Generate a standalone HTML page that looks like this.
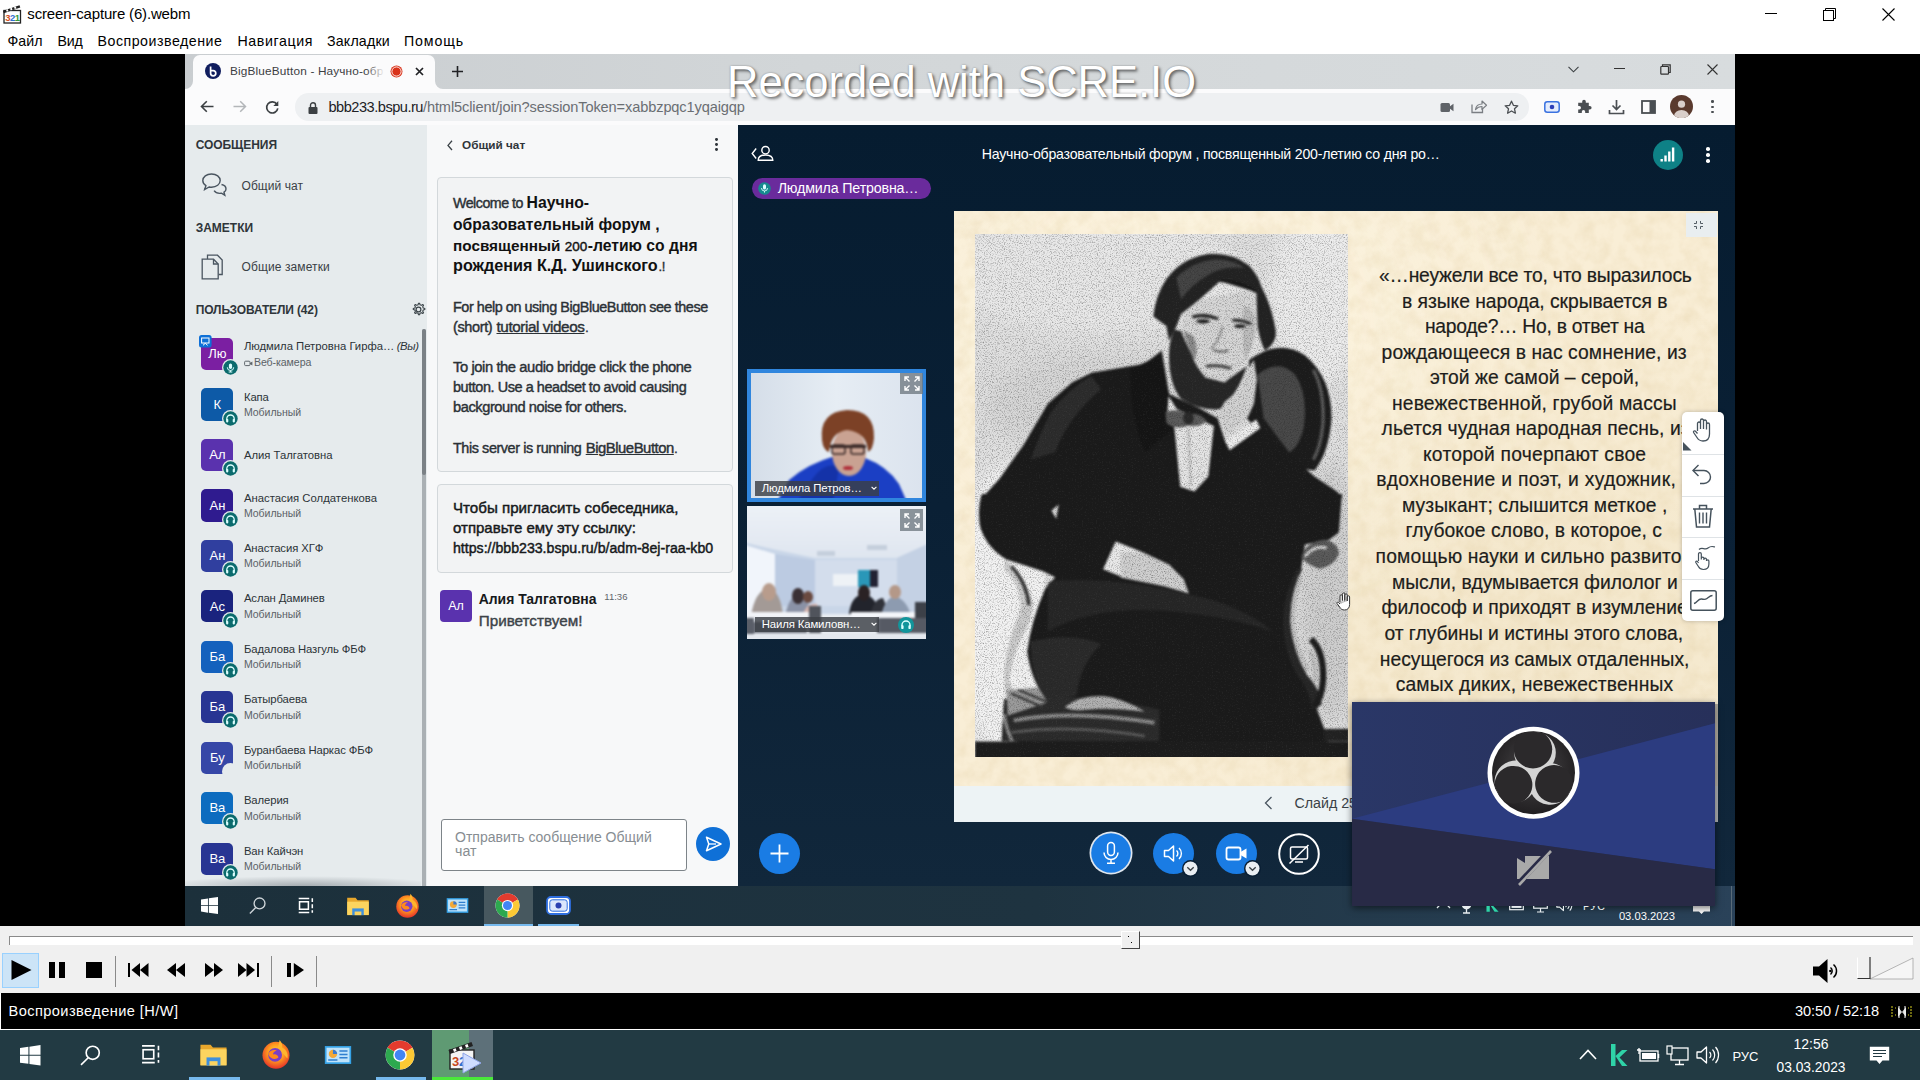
<!DOCTYPE html>
<html><head><meta charset="utf-8"><title>screen</title>
<style>
html,body{margin:0;padding:0;background:#000;}
body{width:1920px;height:1080px;position:relative;overflow:hidden;font-family:"Liberation Sans",sans-serif;}
body div, body svg{position:absolute;}
svg{overflow:visible;}
</style></head><body>
<div style="left:0px;top:0px;width:1920px;height:54px;background:#fff;"></div>
<svg style="left:2px;top:4px;" width="20" height="20" viewBox="0 0 20 20"><rect x="2" y="6.5" width="16.5" height="12.5" fill="#fff" stroke="#222" stroke-width="1.3"/>
<path d="M1 6.8 L17.5 1.2 L18.3 3.6 L1.8 9.2Z" fill="#222"/>
<path d="M4 5.8l1.8-.6.7 2-1.8.6zM8 4.4l1.8-.6.7 2-1.8.6zM12 3.1l1.8-.6.7 2-1.8.6z" fill="#fff"/>
<text x="3.2" y="17" font-family="Liberation Sans" font-weight="700" font-size="9.5" fill="#d4501e">3</text>
<text x="8" y="17" font-family="Liberation Sans" font-weight="700" font-size="9.5" fill="#2f6fd0">2</text>
<text x="12.8" y="17" font-family="Liberation Sans" font-weight="700" font-size="9.5" fill="#3a9a3a">1</text></svg>
<div style="left:27.3px;top:5px;font:400 15px/17px 'Liberation Sans',sans-serif;color:#000;letter-spacing:-0.162px;white-space:pre;">screen-capture (6).webm</div>
<div style="left:7.5px;top:33px;font:400 14.2px/16px 'Liberation Sans',sans-serif;color:#000;letter-spacing:0.022px;white-space:pre;">Файл</div>
<div style="left:57.5px;top:33px;font:400 14.2px/16px 'Liberation Sans',sans-serif;color:#000;letter-spacing:-0.230px;white-space:pre;">Вид</div>
<div style="left:97.5px;top:33px;font:400 14.2px/16px 'Liberation Sans',sans-serif;color:#000;letter-spacing:0.519px;white-space:pre;">Воспроизведение</div>
<div style="left:237.5px;top:33px;font:400 14.2px/16px 'Liberation Sans',sans-serif;color:#000;letter-spacing:0.595px;white-space:pre;">Навигация</div>
<div style="left:327px;top:33px;font:400 14.2px/16px 'Liberation Sans',sans-serif;color:#000;letter-spacing:0.192px;white-space:pre;">Закладки</div>
<div style="left:404px;top:33px;font:400 14.2px/16px 'Liberation Sans',sans-serif;color:#000;letter-spacing:0.859px;white-space:pre;">Помощь</div>
<div style="left:1765px;top:13px;width:12px;height:1px;background:#000;"></div>
<svg style="left:1822px;top:7px;" width="15" height="15" viewBox="0 0 15 15"><path d="M3.5 3.5V1.5H13.5V11.5H11.5" fill="none" stroke="#000" stroke-width="1"/><rect x="1.5" y="3.5" width="10" height="10" fill="none" stroke="#000" stroke-width="1"/></svg>
<svg style="left:1881px;top:7px;" width="15" height="15" viewBox="0 0 15 15"><path d="M1.5 1.5L13.5 13.5M13.5 1.5L1.5 13.5" stroke="#000" stroke-width="1.1" fill="none"/></svg>
<div style="left:0px;top:54px;width:1920px;height:872px;background:#000;"></div>
<div style="left:0px;top:926px;width:1920px;height:67px;background:#f0f0f0;"></div>
<div style="left:9px;top:936px;width:1904px;height:9px;background:#fff;border-top:1px solid #8a8a8a;border-left:1px solid #8a8a8a;box-sizing:border-box;"></div>
<div style="left:1121px;top:931px;width:19px;height:18px;background:#f0f0f0;border:1px solid #fff;border-right:1px solid #444;border-bottom:1px solid #444;box-sizing:border-box;"></div>
<div style="left:2px;top:953px;width:37px;height:35px;background:#cce4f7;border:1px solid #99d1ff;box-sizing:border-box;"></div>
<div style="left:0px;top:993px;width:1920px;height:37px;background:#000;border-left:1px solid #fff;border-bottom:1px solid #fff;box-sizing:border-box;"></div>
<div style="left:8.5px;top:1003px;font:400 14.6px/16px 'Liberation Sans',sans-serif;color:#fff;letter-spacing:0.425px;white-space:pre;">Воспроизведение [H/W]</div>
<div style="left:1795px;top:1003px;font:400 14.6px/16px 'Liberation Sans',sans-serif;color:#fff;letter-spacing:-0.095px;white-space:pre;">30:50 / 52:18</div>
<div style="left:0px;top:1030px;width:1920px;height:50px;background:#223a43;"></div>
<div style="left:185px;top:54px;width:1550px;height:34.5px;background:linear-gradient(90deg,#c9cdd0 0%,#d2d6d8 40%,#d8dcde 100%);"></div>
<div style="left:193px;top:54.5px;width:242px;height:34px;background:#fbfbfc;border-radius:7px 7px 0 0;"></div>
<svg style="left:185px;top:80.5px;" width="8" height="8" viewBox="0 0 8 8"><path d="M8 8H0A8 8 0 0 0 8 0Z" fill="#fbfbfc"/></svg>
<svg style="left:435px;top:80.5px;" width="8" height="8" viewBox="0 0 8 8"><path d="M0 8H8A8 8 0 0 1 0 0Z" fill="#fbfbfc"/></svg>
<svg style="left:205px;top:63px;" width="16" height="16" viewBox="0 0 16 16"><circle cx="8" cy="8" r="8" fill="#101d5e"/><path d="M5.6 3.6V10.2a2.6 2.6 0 1 0 2.6-2.6H5.8" fill="none" stroke="#fff" stroke-width="1.7"/></svg>
<div style="left:230px;top:64px;font:400 11.8px/14px 'Liberation Sans',sans-serif;color:#3c4043;letter-spacing:0.167px;white-space:pre;">BigBlueButton - Научно-обр</div>
<div style="left:366px;top:60px;width:22px;height:22px;background:linear-gradient(90deg,rgba(251,251,252,0),#fbfbfc 85%);"></div>
<svg style="left:390px;top:64.5px;" width="13" height="13" viewBox="0 0 13 13"><circle cx="6.5" cy="6.5" r="6" fill="#d9321a"/><circle cx="6.5" cy="6.5" r="4.6" fill="none" stroke="#fff" stroke-width="0.9"/></svg>
<svg style="left:414.5px;top:66.5px;" width="9" height="9" viewBox="0 0 9 9"><path d="M1 1L8 8M8 1L1 8" stroke="#202124" stroke-width="1.7" fill="none"/></svg>
<svg style="left:451.5px;top:65.5px;" width="11" height="11" viewBox="0 0 11 11"><path d="M5.5 0V11M0 5.5H11" stroke="#202124" stroke-width="1.6" fill="none"/></svg>
<svg style="left:1567.5px;top:65.5px;" width="11" height="7" viewBox="0 0 11 7"><path d="M0.5 0.8L5.5 5.8L10.5 0.8" stroke="#3c4043" stroke-width="1.1" fill="none"/></svg>
<div style="left:1614px;top:68.4px;width:10.5px;height:1px;background:#333;"></div>
<svg style="left:1659.5px;top:63.5px;" width="11" height="11" viewBox="0 0 11 11"><path d="M2.5 2.5V0.8H10.2V8.5H8.5" fill="none" stroke="#333" stroke-width="1.2"/><rect x="0.8" y="2.5" width="7.7" height="7.7" rx="0.8" fill="none" stroke="#333" stroke-width="1.2"/></svg>
<svg style="left:1706.5px;top:63.5px;" width="11" height="11" viewBox="0 0 11 11"><path d="M0.5 0.5L10.5 10.5M10.5 0.5L0.5 10.5" stroke="#333" stroke-width="1.1" fill="none"/></svg>
<div style="left:185px;top:88.5px;width:1550px;height:37px;background:#fbfbfc;"></div>
<div style="left:294.5px;top:93.2px;width:1234.5px;height:27.4px;background:#eef0f2;border-radius:13.7px;"></div>
<svg style="left:200px;top:100px;" width="14" height="13" viewBox="0 0 14 13"><path d="M13.5 6.5H1.8M6.8 1.2L1.5 6.5L6.8 11.8" stroke="#3c4043" stroke-width="1.6" fill="none"/></svg>
<svg style="left:233px;top:100px;" width="14" height="13" viewBox="0 0 14 13"><path d="M0.5 6.5H12.2M7.2 1.2L12.5 6.5L7.2 11.8" stroke="#b3b6b9" stroke-width="1.5" fill="none"/></svg>
<svg style="left:264.5px;top:99.5px;" width="14" height="14" viewBox="0 0 14 14"><path d="M11.9 4.2A5.6 5.6 0 1 0 12.8 8.4" stroke="#3c4043" stroke-width="1.7" fill="none"/><path d="M13.3 1V6H8.3Z" fill="#3c4043"/></svg>
<svg style="left:307.5px;top:101.5px;" width="10" height="12" viewBox="0 0 10 12"><rect x="0.5" y="5" width="9" height="7" rx="1" fill="#3c4043"/><path d="M2.5 5V3.2a2.5 2.5 0 0 1 5 0V5" stroke="#3c4043" stroke-width="1.4" fill="none"/></svg>
<div style="left:328.5px;top:99px;font:400 14.6px/16px 'Liberation Sans',sans-serif;color:#202124;letter-spacing:-0.498px;white-space:pre;">bbb233.bspu.ru</div>
<div style="left:423px;top:99px;font:400 14.6px/16px 'Liberation Sans',sans-serif;color:#6a6e72;letter-spacing:-0.117px;white-space:pre;">/html5client/join?sessionToken=xabbzpqc1yqaigqp</div>
<div style="left:185px;top:125px;width:242px;height:761px;background:#e6ebed;"></div>
<div style="left:427px;top:125px;width:310.5px;height:761px;background:#f7f8f9;"></div>
<div style="left:737.5px;top:125px;width:997.5px;height:761px;background:#0b2236;"></div>
<div style="left:195.7px;top:138px;font:700 12px/14px 'Liberation Sans',sans-serif;color:#2f353a;letter-spacing:-0.057px;white-space:pre;">СООБЩЕНИЯ</div>
<div style="left:195.7px;top:221px;font:700 12px/14px 'Liberation Sans',sans-serif;color:#2f353a;letter-spacing:-0.009px;white-space:pre;">ЗАМЕТКИ</div>
<div style="left:195.7px;top:303px;font:700 12px/14px 'Liberation Sans',sans-serif;color:#2f353a;letter-spacing:-0.129px;white-space:pre;">ПОЛЬЗОВАТЕЛИ (42)</div>
<div style="left:241.5px;top:179px;font:400 12px/14px 'Liberation Sans',sans-serif;color:#3a4146;letter-spacing:0.058px;white-space:pre;">Общий чат</div>
<div style="left:241.5px;top:260px;font:400 12px/14px 'Liberation Sans',sans-serif;color:#3a4146;letter-spacing:0.104px;white-space:pre;">Общие заметки</div>
<svg style="left:201px;top:172px;" width="28" height="26" viewBox="0 0 28 26"><path d="M10.5 2C5.5 2 1.8 4.9 1.8 8.6c0 2.1 1.2 3.9 3.1 5.1L3.6 17.6l4.6-2.6c.7.2 1.5.2 2.3.2 5 0 8.7-2.9 8.7-6.6S15.500 2 10.5 2Z" fill="none" stroke="#4a5560" stroke-width="1.4"/>
<path d="M20.500 12.500c2.700.6 4.500 2.300 4.500 4.400 0 1.300-.8 2.500-2 3.300l.8 3-3.400-2c-.6.100-1.100.200-1.700.200-2.500 0-4.600-1.100-5.600-2.700" fill="none" stroke="#4a5560" stroke-width="1.4"/></svg>
<svg style="left:201px;top:254px;" width="24" height="26" viewBox="0 0 24 26"><path d="M6.500 5V1.200H16.500L21.200 6V20.500H17.500" fill="none" stroke="#4a5560" stroke-width="1.3"/>
<path d="M1.200 5.200H12.500L17.200 10V24.800H1.200Z" fill="#e6ebed" stroke="#4a5560" stroke-width="1.3"/><path d="M12.500 5.200V10H17.200" fill="none" stroke="#4a5560" stroke-width="1.3"/></svg>
<svg style="left:410.5px;top:301.5px;" width="15" height="15" viewBox="0 0 15 15"><circle cx="7.5" cy="7.5" r="2.400" fill="none" stroke="#3a4348" stroke-width="1.2"/>
<path d="M7.500 1.200l1.100 0 .4 1.600 1.300.55 1.450-.85.800.800-.85 1.450.55 1.300 1.600.4v1.100l-1.600.4-.55 1.300.85 1.450-.800.800-1.450-.85-1.300.55-.4 1.600h-1.100l-.4-1.600-1.300-.55-1.450.85-.800-.800.85-1.450-.55-1.300-1.600-.4v-1.100l1.600-.4.55-1.300-.85-1.450.800-.800 1.450.85 1.300-.55z" fill="none" stroke="#3a4348" stroke-width="1.1" stroke-linejoin="round"/></svg>
<div style="left:421.7px;top:328.5px;width:4.2px;height:557px;background:#aab0b4;border-radius:2px 2px 0 0;"></div>
<div style="left:421.7px;top:328.5px;width:4.2px;height:146px;background:#7b8186;border-radius:2px;"></div>
<div style="left:201.3px;top:338.0px;width:32.2px;height:32.2px;background:#7b1fa2;border-radius:5px;"></div>
<div style="left:-282.6px;width:1000px;text-align:center;top:346px;font:400 13px/15px 'Liberation Sans',sans-serif;color:#fff;white-space:pre;">Лю</div>
<svg style="left:222.3px;top:359.2px;" width="17" height="17" viewBox="0 0 17 17"><circle cx="8.500" cy="8.500" r="8.500" fill="#e6ebed"/><circle cx="8.500" cy="8.500" r="7.200" fill="#0b6b6d"/><g transform="translate(1.500 1.700)"><rect x="5.400" y="2.800" width="3.200" height="5.400" rx="1.600" fill="#dff"/><path d="M3.800 6.600a3.200 3.200 0 0 0 6.400 0M7 9.800v1.400M5.200 11.300h3.600" fill="none" stroke="#dff" stroke-width="1"/></g></svg>
<div style="left:243.9px;top:340px;font:400 11.3px/12px 'Liberation Sans',sans-serif;color:#2c3338;letter-spacing:-0.015px;white-space:pre;">Людмила Петровна Гирфа…</div>
<svg style="left:244px;top:360.0px;" width="9" height="7" viewBox="0 0 9 7"><rect x=".6" y="1.200" width="5.400" height="4.400" rx="1" fill="none" stroke="#5e656a" stroke-width="1"/><path d="M6 3l2.400-1.400v3.800L6 4z" fill="#5e656a"/></svg>
<div style="left:253.9px;top:356px;font:400 10.6px/12px 'Liberation Sans',sans-serif;color:#5b6267;letter-spacing:-0.079px;white-space:pre;">Веб-камера</div>
<div style="left:201.3px;top:388.4px;width:32.2px;height:32.2px;background:#0d5aa7;border-radius:5px;"></div>
<div style="left:-282.6px;width:1000px;text-align:center;top:397px;font:400 13px/15px 'Liberation Sans',sans-serif;color:#fff;white-space:pre;">К</div>
<svg style="left:222.3px;top:409.6px;" width="17" height="17" viewBox="0 0 17 17"><circle cx="8.500" cy="8.500" r="8.500" fill="#e6ebed"/><circle cx="8.500" cy="8.500" r="7.200" fill="#0b6b6d"/><g transform="translate(1.500 1.700)"><path d="M3.300 8.300V7a3.700 3.700 0 0 1 7.400 0v1.300" fill="none" stroke="#dff" stroke-width="1.300"/><rect x="2.600" y="7.300" width="2.200" height="3.400" rx=".8" fill="#dff"/><rect x="9.200" y="7.300" width="2.200" height="3.400" rx=".8" fill="#dff"/></g></svg>
<div style="left:243.9px;top:391px;font:400 11.3px/12px 'Liberation Sans',sans-serif;color:#2c3338;letter-spacing:-0.095px;white-space:pre;">Капа</div>
<div style="left:243.9px;top:406px;font:400 10.5px/12px 'Liberation Sans',sans-serif;color:#5b6267;letter-spacing:-0.010px;white-space:pre;">Мобильный</div>
<div style="left:201.3px;top:438.9px;width:32.2px;height:32.2px;background:#5a32ae;border-radius:5px;"></div>
<div style="left:-282.6px;width:1000px;text-align:center;top:447px;font:400 13px/15px 'Liberation Sans',sans-serif;color:#fff;white-space:pre;">Ал</div>
<svg style="left:222.3px;top:460.1px;" width="17" height="17" viewBox="0 0 17 17"><circle cx="8.500" cy="8.500" r="8.500" fill="#e6ebed"/><circle cx="8.500" cy="8.500" r="7.200" fill="#0b6b6d"/><g transform="translate(1.500 1.700)"><path d="M3.300 8.300V7a3.700 3.700 0 0 1 7.400 0v1.300" fill="none" stroke="#dff" stroke-width="1.300"/><rect x="2.600" y="7.300" width="2.200" height="3.400" rx=".8" fill="#dff"/><rect x="9.200" y="7.300" width="2.200" height="3.400" rx=".8" fill="#dff"/></g></svg>
<div style="left:243.9px;top:449px;font:400 11.3px/12px 'Liberation Sans',sans-serif;color:#2c3338;letter-spacing:-0.010px;white-space:pre;">Алия Талгатовна</div>
<div style="left:201.3px;top:489.4px;width:32.2px;height:32.2px;background:#2f1b8f;border-radius:5px;"></div>
<div style="left:-282.6px;width:1000px;text-align:center;top:498px;font:400 13px/15px 'Liberation Sans',sans-serif;color:#fff;white-space:pre;">Ан</div>
<svg style="left:222.3px;top:510.6px;" width="17" height="17" viewBox="0 0 17 17"><circle cx="8.500" cy="8.500" r="8.500" fill="#e6ebed"/><circle cx="8.500" cy="8.500" r="7.200" fill="#0b6b6d"/><g transform="translate(1.500 1.700)"><path d="M3.300 8.300V7a3.700 3.700 0 0 1 7.400 0v1.300" fill="none" stroke="#dff" stroke-width="1.300"/><rect x="2.600" y="7.300" width="2.200" height="3.400" rx=".8" fill="#dff"/><rect x="9.200" y="7.300" width="2.200" height="3.400" rx=".8" fill="#dff"/></g></svg>
<div style="left:243.9px;top:492px;font:400 11.3px/12px 'Liberation Sans',sans-serif;color:#2c3338;letter-spacing:0.019px;white-space:pre;">Анастасия Солдатенкова</div>
<div style="left:243.9px;top:507px;font:400 10.5px/12px 'Liberation Sans',sans-serif;color:#5b6267;letter-spacing:-0.010px;white-space:pre;">Мобильный</div>
<div style="left:201.3px;top:539.8px;width:32.2px;height:32.2px;background:#303f9f;border-radius:5px;"></div>
<div style="left:-282.6px;width:1000px;text-align:center;top:548px;font:400 13px/15px 'Liberation Sans',sans-serif;color:#fff;white-space:pre;">Ан</div>
<svg style="left:222.3px;top:561.0px;" width="17" height="17" viewBox="0 0 17 17"><circle cx="8.500" cy="8.500" r="8.500" fill="#e6ebed"/><circle cx="8.500" cy="8.500" r="7.200" fill="#0b6b6d"/><g transform="translate(1.500 1.700)"><path d="M3.300 8.300V7a3.700 3.700 0 0 1 7.400 0v1.300" fill="none" stroke="#dff" stroke-width="1.300"/><rect x="2.600" y="7.300" width="2.200" height="3.400" rx=".8" fill="#dff"/><rect x="9.200" y="7.300" width="2.200" height="3.400" rx=".8" fill="#dff"/></g></svg>
<div style="left:243.9px;top:542px;font:400 11.3px/12px 'Liberation Sans',sans-serif;color:#2c3338;letter-spacing:-0.093px;white-space:pre;">Анастасия ХГФ</div>
<div style="left:243.9px;top:557px;font:400 10.5px/12px 'Liberation Sans',sans-serif;color:#5b6267;letter-spacing:-0.010px;white-space:pre;">Мобильный</div>
<div style="left:201.3px;top:590.2px;width:32.2px;height:32.2px;background:#1a237e;border-radius:5px;"></div>
<div style="left:-282.6px;width:1000px;text-align:center;top:599px;font:400 13px/15px 'Liberation Sans',sans-serif;color:#fff;white-space:pre;">Ас</div>
<svg style="left:222.3px;top:611.5px;" width="17" height="17" viewBox="0 0 17 17"><circle cx="8.500" cy="8.500" r="8.500" fill="#e6ebed"/><circle cx="8.500" cy="8.500" r="7.200" fill="#0b6b6d"/><g transform="translate(1.500 1.700)"><path d="M3.300 8.300V7a3.700 3.700 0 0 1 7.400 0v1.300" fill="none" stroke="#dff" stroke-width="1.300"/><rect x="2.600" y="7.300" width="2.200" height="3.400" rx=".8" fill="#dff"/><rect x="9.200" y="7.300" width="2.200" height="3.400" rx=".8" fill="#dff"/></g></svg>
<div style="left:243.9px;top:592px;font:400 11.3px/12px 'Liberation Sans',sans-serif;color:#2c3338;letter-spacing:-0.095px;white-space:pre;">Аслан Даминев</div>
<div style="left:243.9px;top:608px;font:400 10.5px/12px 'Liberation Sans',sans-serif;color:#5b6267;letter-spacing:-0.010px;white-space:pre;">Мобильный</div>
<div style="left:201.3px;top:640.7px;width:32.2px;height:32.2px;background:#1461bd;border-radius:5px;"></div>
<div style="left:-282.6px;width:1000px;text-align:center;top:649px;font:400 13px/15px 'Liberation Sans',sans-serif;color:#fff;white-space:pre;">Ба</div>
<svg style="left:222.3px;top:661.9px;" width="17" height="17" viewBox="0 0 17 17"><circle cx="8.500" cy="8.500" r="8.500" fill="#e6ebed"/><circle cx="8.500" cy="8.500" r="7.200" fill="#0b6b6d"/><g transform="translate(1.500 1.700)"><path d="M3.300 8.300V7a3.700 3.700 0 0 1 7.400 0v1.300" fill="none" stroke="#dff" stroke-width="1.300"/><rect x="2.600" y="7.300" width="2.200" height="3.400" rx=".8" fill="#dff"/><rect x="9.200" y="7.300" width="2.200" height="3.400" rx=".8" fill="#dff"/></g></svg>
<div style="left:243.9px;top:643px;font:400 11.3px/12px 'Liberation Sans',sans-serif;color:#2c3338;letter-spacing:-0.093px;white-space:pre;">Бадалова Назгуль ФБФ</div>
<div style="left:243.9px;top:658px;font:400 10.5px/12px 'Liberation Sans',sans-serif;color:#5b6267;letter-spacing:-0.010px;white-space:pre;">Мобильный</div>
<div style="left:201.3px;top:691.2px;width:32.2px;height:32.2px;background:#283593;border-radius:5px;"></div>
<div style="left:-282.6px;width:1000px;text-align:center;top:699px;font:400 13px/15px 'Liberation Sans',sans-serif;color:#fff;white-space:pre;">Ба</div>
<svg style="left:222.3px;top:712.4px;" width="17" height="17" viewBox="0 0 17 17"><circle cx="8.500" cy="8.500" r="8.500" fill="#e6ebed"/><circle cx="8.500" cy="8.500" r="7.200" fill="#0b6b6d"/><g transform="translate(1.500 1.700)"><path d="M3.300 8.300V7a3.700 3.700 0 0 1 7.400 0v1.300" fill="none" stroke="#dff" stroke-width="1.300"/><rect x="2.600" y="7.300" width="2.200" height="3.400" rx=".8" fill="#dff"/><rect x="9.200" y="7.300" width="2.200" height="3.400" rx=".8" fill="#dff"/></g></svg>
<div style="left:243.9px;top:693px;font:400 11.3px/12px 'Liberation Sans',sans-serif;color:#2c3338;letter-spacing:-0.096px;white-space:pre;">Батырбаева</div>
<div style="left:243.9px;top:709px;font:400 10.5px/12px 'Liberation Sans',sans-serif;color:#5b6267;letter-spacing:-0.010px;white-space:pre;">Мобильный</div>
<div style="left:201.3px;top:741.6px;width:32.2px;height:32.2px;background:#3647a7;border-radius:5px;"></div>
<div style="left:-282.6px;width:1000px;text-align:center;top:750px;font:400 13px/15px 'Liberation Sans',sans-serif;color:#fff;white-space:pre;">Бу</div>
<svg style="left:222.3px;top:762.8px;" width="17" height="17" viewBox="0 0 17 17"><circle cx="8.500" cy="8.500" r="8.500" fill="#e6ebed"/></svg>
<div style="left:243.9px;top:744px;font:400 11.3px/12px 'Liberation Sans',sans-serif;color:#2c3338;letter-spacing:-0.094px;white-space:pre;">Буранбаева Наркас ФБФ</div>
<div style="left:243.9px;top:759px;font:400 10.5px/12px 'Liberation Sans',sans-serif;color:#5b6267;letter-spacing:-0.010px;white-space:pre;">Мобильный</div>
<div style="left:201.3px;top:792.0px;width:32.2px;height:32.2px;background:#0d6cbf;border-radius:5px;"></div>
<div style="left:-282.6px;width:1000px;text-align:center;top:800px;font:400 13px/15px 'Liberation Sans',sans-serif;color:#fff;white-space:pre;">Ва</div>
<svg style="left:222.3px;top:813.2px;" width="17" height="17" viewBox="0 0 17 17"><circle cx="8.500" cy="8.500" r="8.500" fill="#e6ebed"/><circle cx="8.500" cy="8.500" r="7.200" fill="#0b6b6d"/><g transform="translate(1.500 1.700)"><path d="M3.300 8.300V7a3.700 3.700 0 0 1 7.400 0v1.300" fill="none" stroke="#dff" stroke-width="1.300"/><rect x="2.600" y="7.300" width="2.200" height="3.400" rx=".8" fill="#dff"/><rect x="9.200" y="7.300" width="2.200" height="3.400" rx=".8" fill="#dff"/></g></svg>
<div style="left:243.9px;top:794px;font:400 11.3px/12px 'Liberation Sans',sans-serif;color:#2c3338;letter-spacing:-0.097px;white-space:pre;">Валерия</div>
<div style="left:243.9px;top:810px;font:400 10.5px/12px 'Liberation Sans',sans-serif;color:#5b6267;letter-spacing:-0.010px;white-space:pre;">Мобильный</div>
<div style="left:201.3px;top:842.5px;width:32.2px;height:32.2px;background:#283593;border-radius:5px;"></div>
<div style="left:-282.6px;width:1000px;text-align:center;top:851px;font:400 13px/15px 'Liberation Sans',sans-serif;color:#fff;white-space:pre;">Ва</div>
<svg style="left:222.3px;top:863.7px;" width="17" height="17" viewBox="0 0 17 17"><circle cx="8.500" cy="8.500" r="8.500" fill="#e6ebed"/><circle cx="8.500" cy="8.500" r="7.200" fill="#0b6b6d"/><g transform="translate(1.500 1.700)"><path d="M3.300 8.300V7a3.700 3.700 0 0 1 7.400 0v1.300" fill="none" stroke="#dff" stroke-width="1.300"/><rect x="2.600" y="7.300" width="2.200" height="3.400" rx=".8" fill="#dff"/><rect x="9.200" y="7.300" width="2.200" height="3.400" rx=".8" fill="#dff"/></g></svg>
<div style="left:243.9px;top:845px;font:400 11.3px/12px 'Liberation Sans',sans-serif;color:#2c3338;letter-spacing:-0.090px;white-space:pre;">Ван Кайчэн</div>
<div style="left:243.9px;top:860px;font:400 10.5px/12px 'Liberation Sans',sans-serif;color:#5b6267;letter-spacing:-0.010px;white-space:pre;">Мобильный</div>
<div style="left:396.7px;top:340px;font:italic 400 11.3px/12px 'Liberation Sans',sans-serif;color:#2c3338;letter-spacing:-0.345px;white-space:pre;">(Вы)</div>
<svg style="left:198.5px;top:335px;" width="13" height="13" viewBox="0 0 13 13"><rect width="12.600" height="12.600" rx="2.500" fill="#0f70d7"/><rect x="2.600" y="3" width="7.400" height="5" fill="none" stroke="#fff" stroke-width="1"/><path d="M4 10.300l2.300-2 2.300 2" fill="none" stroke="#fff" stroke-width="1"/></svg>
<svg style="left:446.5px;top:140px;" width="6" height="11" viewBox="0 0 6 11"><path d="M5 0.800L1 5.400L5 10" fill="none" stroke="#3a4146" stroke-width="1.300"/></svg>
<div style="left:462px;top:138px;font:700 11.76px/13px 'Liberation Sans',sans-serif;color:#2f353a;letter-spacing:0.001px;white-space:pre;">Общий чат</div>
<div style="left:715.1px;top:137.79999999999998px;width:2.8px;height:2.8px;background:#2f353a;border-radius:50%;"></div>
<div style="left:715.1px;top:143.0px;width:2.8px;height:2.8px;background:#2f353a;border-radius:50%;"></div>
<div style="left:715.1px;top:148.2px;width:2.8px;height:2.8px;background:#2f353a;border-radius:50%;"></div>
<div style="left:437.2px;top:177.3px;width:295.5px;height:295.2px;background:#f2f3f4;border:1px solid #d3d8db;border-radius:4px;box-sizing:border-box;"></div>
<div style="left:453px;top:195px;font:400 14.24px/16px 'Liberation Sans',sans-serif;color:#2b3136;letter-spacing:-0.492px;white-space:pre;-webkit-text-stroke:0.42px #2b3136;">Welcome to</div>
<div style="left:526.6px;top:194px;font:700 15.77px/17px 'Liberation Sans',sans-serif;color:#111;letter-spacing:0.001px;white-space:pre;">Научно-</div>
<div style="left:453px;top:216px;font:700 15.65px/17px 'Liberation Sans',sans-serif;color:#111;letter-spacing:0.003px;white-space:pre;">образовательный форум ,</div>
<div style="left:453px;top:237px;font:700 15.31px/17px 'Liberation Sans',sans-serif;color:#111;letter-spacing:0.003px;white-space:pre;">посвященный</div>
<div style="left:564.8px;top:239px;font:400 13.49px/15px 'Liberation Sans',sans-serif;color:#111;letter-spacing:-0.003px;white-space:pre;-webkit-text-stroke:0.4px #111;">200</div>
<div style="left:587.8px;top:237px;font:700 15.68px/17px 'Liberation Sans',sans-serif;color:#111;letter-spacing:0.001px;white-space:pre;">-летию со дня</div>
<div style="left:453px;top:256px;font:700 16.21px/18px 'Liberation Sans',sans-serif;color:#111;letter-spacing:-0.002px;white-space:pre;">рождения К.Д. Ушинского</div>
<div style="left:658.5px;top:259px;font:400 13px/15px 'Liberation Sans',sans-serif;color:#2b3136;letter-spacing:-0.362px;white-space:pre;-webkit-text-stroke:0.42px #2b3136;">.!</div>
<div style="left:453px;top:299px;font:400 14.39px/16px 'Liberation Sans',sans-serif;color:#2b3136;letter-spacing:-0.434px;white-space:pre;-webkit-text-stroke:0.42px #2b3136;">For help on using BigBlueButton see these</div>
<div style="left:453px;top:319px;font:400 14.53px/16px 'Liberation Sans',sans-serif;color:#2b3136;letter-spacing:-0.377px;white-space:pre;-webkit-text-stroke:0.42px #2b3136;">(short) </div>
<div style="left:496.5px;top:318px;font:400 15.26px/17px 'Liberation Sans',sans-serif;color:#2b3136;letter-spacing:-0.410px;white-space:pre;text-decoration:underline;-webkit-text-stroke:0.42px #2b3136;">tutorial videos</div>
<div style="left:585.3px;top:321px;font:400 12px/14px 'Liberation Sans',sans-serif;color:#2b3136;white-space:pre;-webkit-text-stroke:0.42px #2b3136;">.</div>
<div style="left:453px;top:359px;font:400 14.75px/16px 'Liberation Sans',sans-serif;color:#2b3136;letter-spacing:-0.418px;white-space:pre;-webkit-text-stroke:0.42px #2b3136;">To join the audio bridge click the phone</div>
<div style="left:453px;top:379px;font:400 14.44px/16px 'Liberation Sans',sans-serif;color:#2b3136;letter-spacing:-0.431px;white-space:pre;-webkit-text-stroke:0.42px #2b3136;">button. Use a headset to avoid causing</div>
<div style="left:453px;top:399px;font:400 14.66px/16px 'Liberation Sans',sans-serif;color:#2b3136;letter-spacing:-0.436px;white-space:pre;-webkit-text-stroke:0.42px #2b3136;">background noise for others.</div>
<div style="left:453px;top:440px;font:400 14.36px/16px 'Liberation Sans',sans-serif;color:#2b3136;letter-spacing:-0.403px;white-space:pre;-webkit-text-stroke:0.42px #2b3136;">This server is running </div>
<div style="left:585.7px;top:440px;font:400 14.89px/16px 'Liberation Sans',sans-serif;color:#2b3136;letter-spacing:-0.475px;white-space:pre;text-decoration:underline;-webkit-text-stroke:0.42px #2b3136;">BigBlueButton</div>
<div style="left:674.3px;top:442px;font:400 12px/14px 'Liberation Sans',sans-serif;color:#2b3136;white-space:pre;-webkit-text-stroke:0.42px #2b3136;">.</div>
<div style="left:437.2px;top:484px;width:295.5px;height:88.5px;background:#f2f3f4;border:1px solid #d3d8db;border-radius:4px;box-sizing:border-box;"></div>
<div style="left:453px;top:499px;font:400 15.13px/17px 'Liberation Sans',sans-serif;color:#16191b;letter-spacing:0.002px;white-space:pre;-webkit-text-stroke:0.45px #16191b;">Чтобы пригласить собеседника,</div>
<div style="left:453px;top:519px;font:400 15.0px/17px 'Liberation Sans',sans-serif;color:#16191b;letter-spacing:0.001px;white-space:pre;-webkit-text-stroke:0.45px #16191b;">отправьте ему эту ссылку:</div>
<div style="left:453px;top:540px;font:400 14.15px/16px 'Liberation Sans',sans-serif;color:#16191b;letter-spacing:-0.001px;white-space:pre;-webkit-text-stroke:0.45px #16191b;">https:</div>
<div style="left:487.6px;top:540px;font:400 14.15px/16px 'Liberation Sans',sans-serif;color:#16191b;letter-spacing:-0.002px;white-space:pre;-webkit-text-stroke:0.45px #16191b;">//bbb233.bspu.ru/b/adm-8ej-raa-kb0</div>
<div style="left:440px;top:590px;width:32px;height:31.5px;background:#5a32ae;border-radius:4px;"></div>
<div style="left:-44px;width:1000px;text-align:center;top:599px;font:400 12.5px/14px 'Liberation Sans',sans-serif;color:#fff;white-space:pre;">Ал</div>
<div style="left:478.7px;top:591px;font:700 13.95px/16px 'Liberation Sans',sans-serif;color:#16191b;letter-spacing:-0.001px;white-space:pre;">Алия Талгатовна</div>
<div style="left:604.3px;top:591px;font:400 9.55px/11px 'Liberation Sans',sans-serif;color:#5f666b;letter-spacing:0.002px;white-space:pre;">11:36</div>
<div style="left:478.7px;top:612px;font:400 15.26px/17px 'Liberation Sans',sans-serif;color:#3c4348;letter-spacing:0.001px;white-space:pre;-webkit-text-stroke:0.4px #3c4348;">Приветствуем!</div>
<div style="left:441px;top:818.8px;width:246px;height:52px;background:#fff;border:1.600px solid #7d8489;border-radius:3px;box-sizing:border-box;"></div>
<div style="left:455px;top:829px;font:400 14.02px/16px 'Liberation Sans',sans-serif;color:#878d92;letter-spacing:0.001px;white-space:pre;">Отправить сообщение Общий</div>
<div style="left:455px;top:843px;font:400 14.21px/16px 'Liberation Sans',sans-serif;color:#878d92;letter-spacing:-0.001px;white-space:pre;">чат</div>
<svg style="left:696.3px;top:826.7px;" width="34" height="34" viewBox="0 0 34 34"><circle cx="17" cy="17" r="17" fill="#0f70d7"/><path d="M10.500 10.200L25 17L10.500 23.800L12.800 17Z" fill="none" stroke="#fff" stroke-width="1.500" stroke-linejoin="round"/><path d="M12.800 17H20" stroke="#fff" stroke-width="1.300"/></svg>
<div style="left:737.5px;top:125px;width:997.5px;height:761px;background:linear-gradient(180deg,#061c30 0%,#0a2035 50%,#11273b 100%);"></div>
<svg style="left:751px;top:145px;" width="24" height="17" viewBox="0 0 24 17"><path d="M5.200 3.500L1.200 8.500L5.200 13.500" fill="none" stroke="#fff" stroke-width="1.400"/><circle cx="14.500" cy="5.200" r="3.700" fill="none" stroke="#fff" stroke-width="1.400"/><path d="M7.200 15.300c0-3.400 2.800-5.300 7.300-5.300s7.300 1.900 7.300 5.300z" fill="none" stroke="#fff" stroke-width="1.400"/></svg>
<div style="left:981.8px;top:146px;font:400 14.13px/16px 'Liberation Sans',sans-serif;color:#fff;letter-spacing:-0.218px;white-space:pre;">Научно-образовательный форум , посвященный 200-летию со дня ро…</div>
<svg style="left:1652.5px;top:140px;" width="30" height="30" viewBox="0 0 30 30"><circle cx="15" cy="15" r="15" fill="#0e8186"/><rect x="7.500" y="19" width="2.400" height="2.500" fill="#fff"/><rect x="11.300" y="15.500" width="2.400" height="6" fill="#fff"/><rect x="15.100" y="11.500" width="2.400" height="10" fill="#fff"/><rect x="18.900" y="7.500" width="2.400" height="14" fill="#fff"/></svg>
<div style="left:1706.2px;top:147.0px;width:3.6px;height:3.6px;background:#fff;border-radius:50%;"></div>
<div style="left:1706.2px;top:153.2px;width:3.6px;height:3.6px;background:#fff;border-radius:50%;"></div>
<div style="left:1706.2px;top:159.2px;width:3.6px;height:3.6px;background:#fff;border-radius:50%;"></div>
<div style="left:751.8px;top:178.2px;width:179.2px;height:20.8px;background:#6a2b9c;border-radius:10.400px;"></div>
<svg style="left:757.5px;top:182px;" width="13" height="13" viewBox="0 0 13 13"><circle cx="6.500" cy="6.500" r="6.300" fill="#178a8f"/><rect x="5" y="2.300" width="3" height="5.200" rx="1.500" fill="#dff"/><path d="M3.500 6a3 3 0 0 0 6 0M6.500 9v1.600" fill="none" stroke="#dff" stroke-width=".9"/></svg>
<div style="left:777.7px;top:180px;font:400 14.24px/16px 'Liberation Sans',sans-serif;color:#fff;letter-spacing:-0.164px;white-space:pre;">Людмила Петровна…</div>
<div style="left:747.2px;top:368.900px;width:178.600px;height:133.400px;background:#dfe7f0;overflow:hidden;box-sizing:border-box;border:4.500px solid #3086de;">
<svg style="left:-4.500px;top:-4.500px" width="178.600" height="133.400" viewBox="0 0 178.600 133.400">
<defs><filter color-interpolation-filters="sRGB" id="b1"><feGaussianBlur stdDeviation="1.200"/></filter><linearGradient id="wg" x1="0" y1="0" x2="1" y2="0"><stop offset="0" stop-color="#d4dde8"/><stop offset=".5" stop-color="#e6edf4"/><stop offset="1" stop-color="#dbe3ee"/></linearGradient></defs>
<rect width="178.600" height="133.400" fill="url(#wg)"/>
<g filter="url(#b1)">
<path d="M30 134L42 112Q60 96 88 88L118 90Q140 98 152 116L160 134Z" fill="#1b3fc4"/>
<path d="M66 110Q80 92 92 100L86 134H50Z" fill="#1432a8"/>
<ellipse cx="102" cy="84" rx="17" ry="24" fill="#c9a292"/>
<path d="M75 72Q72 44 100 42Q128 42 127 70Q126 82 121 84Q120 64 100 62Q84 64 82 84Q76 82 75 72Z" fill="#7c4126"/>
<rect x="83" y="77" width="36" height="3" fill="#3a2a28"/><rect x="85" y="77" width="13" height="9" rx="2" fill="none" stroke="#3a2a28" stroke-width="1.500"/><rect x="104" y="77" width="13" height="9" rx="2" fill="none" stroke="#3a2a28" stroke-width="1.500"/>
<ellipse cx="101" cy="100" rx="5" ry="2" fill="#b0303a"/>
</g></svg></div>
<div style="left:900px;top:372.6px;width:23px;height:21.8px;background:rgba(110,120,128,.78);"></div>
<svg style="left:903.5px;top:376px;" width="16" height="15" viewBox="0 0 16 15"><path d="M1 5V1H5M1 1L5.500 5.500M15 5V1H11M15 1L10.500 5.500M1 10V14H5M1 14L5.500 9.500M15 10V14H11M15 14L10.500 9.500" fill="none" stroke="#fff" stroke-width="1.400"/></svg>
<div style="left:754.5px;top:480.8px;width:124.8px;height:15.6px;background:rgba(60,64,70,.82);"></div>
<div style="left:761.7px;top:482px;font:400 11.39px/12px 'Liberation Sans',sans-serif;color:#fff;letter-spacing:-0.135px;white-space:pre;">Людмила Петров…</div>
<svg style="left:870.5px;top:486px;" width="6" height="4" viewBox="0 0 6 4"><path d="M.6.800L3 3.200L5.400.800" fill="none" stroke="#fff" stroke-width="1.100"/></svg>
<div style="left:747.2px;top:505.500px;width:178.600px;height:133.800px;background:#cfdaea;overflow:hidden;">
<svg style="left:0;top:0" width="178.600" height="133.800" viewBox="0 0 178.600 133.800">
<defs><filter color-interpolation-filters="sRGB" id="b2"><feGaussianBlur stdDeviation="1.300"/></filter>
<linearGradient id="cg" x1="0" y1="0" x2="0" y2="1"><stop offset="0" stop-color="#eef2f7"/><stop offset="1" stop-color="#dfe6f0"/></linearGradient></defs>
<g filter="url(#b2)">
<rect x="-5" y="-5" width="190" height="145" fill="#c9d6e8"/>
<path d="M-5 -5H185V36L150 52H68L30 44L-5 36Z" fill="url(#cg)"/>
<path d="M-5 38L28 48V112H-5Z" fill="#f1f5fb"/>
<path d="M28 48L68 54V100H28Z" fill="#bccbe2"/>
<path d="M68 54H150V100H68Z" fill="#d3ddec"/>
<path d="M150 52L185 36V110H150Z" fill="#c4d1e4"/>
<rect x="86" y="68" width="26" height="12" fill="#eef2f6"/><rect x="111" y="64" width="18" height="17" fill="#2a97b8"/><rect x="123" y="64" width="8" height="17" fill="#223"/>
<rect x="70" y="45" width="18" height="5" fill="#c5cfdc"/><rect x="120" y="39" width="20" height="5" fill="#c5cfdc"/>
<path d="M-5 108H185V140H-5Z" fill="#e9edf2"/>
<path d="M4 110Q8 84 22 82Q34 86 36 110Z" fill="#a39a96"/><ellipse cx="22" cy="86" rx="7" ry="9" fill="#b89c8c"/>
<path d="M38 110Q42 90 52 88Q62 92 64 110Z" fill="#8a92a6"/><ellipse cx="51" cy="90" rx="6" ry="8" fill="#3a3034"/>
<ellipse cx="61" cy="91" rx="5" ry="6" fill="#6a4a40"/><path d="M56 108Q60 96 70 98L74 110Z" fill="#d6b6b0"/>
<path d="M102 108Q104 90 116 88Q130 90 132 108Z" fill="#22242c"/><ellipse cx="117" cy="87" rx="6" ry="8" fill="#2a2224"/>
<path d="M124 106Q128 92 136 92L142 106Z" fill="#30323a"/>
<path d="M134 110Q138 92 148 90Q160 94 164 110Z" fill="#8d9bb0"/><ellipse cx="148" cy="86" rx="6" ry="7" fill="#b49888"/>
<rect x="-5" y="106" width="70" height="5" fill="#f2f4f8"/><rect x="104" y="106" width="80" height="6" fill="#f4f6fa"/>
<rect x="62" y="100" width="12" height="34" fill="#50545c"/><rect x="168" y="96" width="14" height="20" fill="#3c4048"/>
<path d="M-5 116H60V134H-5Z" fill="#6a6e78"/><path d="M130 112H185V134H130Z" fill="#5a5e68"/>
<path d="M134 112H185V127H134Z" fill="#565a64"/><rect x="-5" y="127" width="190" height="10" fill="#e4e8ee"/><rect x="-5" y="112" width="12" height="16" fill="#5a5e68"/>
</g></svg></div>
<div style="left:900px;top:509px;width:23px;height:22px;background:rgba(110,120,128,.78);"></div>
<svg style="left:903.5px;top:512.5px;" width="16" height="15" viewBox="0 0 16 15"><path d="M1 5V1H5M1 1L5.500 5.500M15 5V1H11M15 1L10.500 5.500M1 10V14H5M1 14L5.500 9.500M15 10V14H11M15 14L10.500 9.500" fill="none" stroke="#fff" stroke-width="1.400"/></svg>
<div style="left:754.5px;top:617px;width:124.8px;height:14.8px;background:rgba(60,64,70,.82);"></div>
<div style="left:761.7px;top:618px;font:400 11.38px/12px 'Liberation Sans',sans-serif;color:#fff;letter-spacing:-0.134px;white-space:pre;">Наиля Камиловн…</div>
<svg style="left:870.5px;top:622px;" width="6" height="4" viewBox="0 0 6 4"><path d="M.6.800L3 3.200L5.400.800" fill="none" stroke="#fff" stroke-width="1.100"/></svg>
<svg style="left:898.2px;top:616.5px;" width="16" height="16" viewBox="0 0 16 16"><circle cx="8" cy="8" r="8" fill="#12959b"/><path d="M4 9V8a4 4 0 0 1 8 0v1" fill="none" stroke="#dff" stroke-width="1.400"/><rect x="3.200" y="8.200" width="2.400" height="3.800" rx=".8" fill="#dff"/><rect x="10.400" y="8.200" width="2.400" height="3.800" rx=".8" fill="#dff"/></svg>
<div style="left:954px;top:211.3px;width:764px;height:576px;background:#f9eed6;"></div>
<div style="left:954px;top:211.3px;width:764px;height:575.2px;background:radial-gradient(ellipse at 30% 20%,rgba(255,250,235,.5),rgba(255,250,235,0) 50%),radial-gradient(ellipse at 80% 70%,rgba(236,222,190,.45),rgba(236,222,190,0) 55%);"></div>
<svg style="left:954px;top:211.3px;" width="764" height="576" viewBox="0 0 764 576"><defs><filter color-interpolation-filters="sRGB" id="paper" x="0" y="0" width="100%" height="100%"><feTurbulence type="fractalNoise" baseFrequency="0.07" numOctaves="3" seed="5"/><feColorMatrix type="matrix" values="0 0 0 0 0.86  0 0 0 0 0.77  0 0 0 0 0.58  0 0 0 1.6 -0.55"/></filter></defs><rect width="764" height="576" filter="url(#paper)" opacity=".28"/></svg>
<div style="left:954px;top:786.3px;width:764px;height:35.4px;background:#edf3f5;"></div>
<svg style="left:1264px;top:796px;" width="9" height="14" viewBox="0 0 9 14"><path d="M7.500 1L1.500 7L7.500 13" fill="none" stroke="#4a5560" stroke-width="1.300"/></svg>
<div style="left:1294.5px;top:795px;font:400 14.22px/16px 'Liberation Sans',sans-serif;color:#3a4146;letter-spacing:0.002px;white-space:pre;">Слайд 25</div>
<div style="left:974.6px;top:233.8px;width:373px;height:523.4px;overflow:hidden;background:#cfcfcf;"><svg style="left:0;top:0" width="374" height="524" viewBox="0 0 374 524">
<defs>
<filter color-interpolation-filters="sRGB" id="pb" x="-5%" y="-5%" width="110%" height="110%"><feGaussianBlur stdDeviation="1.1"/></filter>
<filter color-interpolation-filters="sRGB" id="pbb" x="-20%" y="-20%" width="140%" height="140%"><feGaussianBlur stdDeviation="9"/></filter>
<filter color-interpolation-filters="sRGB" id="pbm" x="-20%" y="-20%" width="140%" height="140%"><feGaussianBlur stdDeviation="3"/></filter>
<filter color-interpolation-filters="sRGB" id="grain" x="0" y="0" width="100%" height="100%"><feTurbulence type="fractalNoise" baseFrequency="0.85" numOctaves="2" seed="7"/><feColorMatrix type="matrix" values="0 0 0 0 0.12  0 0 0 0 0.12  0 0 0 0 0.12  1.4 0 0 0 -0.66"/></filter>
<filter color-interpolation-filters="sRGB" id="grainL" x="0" y="0" width="100%" height="100%"><feTurbulence type="fractalNoise" baseFrequency="0.7" numOctaves="2" seed="11"/><feColorMatrix type="matrix" values="0 0 0 0 1  0 0 0 0 1  0 0 0 0 1  1.3 0 0 0 -0.72"/></filter>
<clipPath id="fig"><rect width="374" height="524"/></clipPath>
</defs>
<rect width="374" height="524" fill="#e0e0e0"/>
<g filter="url(#pbb)">
<ellipse cx="120" cy="40" rx="150" ry="60" fill="#e8e8e8"/>
<ellipse cx="345" cy="60" rx="50" ry="90" fill="#ececec"/>
<ellipse cx="30" cy="380" rx="50" ry="150" fill="#f2f2f2"/>
<ellipse cx="355" cy="360" rx="30" ry="130" fill="#cecece"/>
<ellipse cx="130" cy="170" rx="120" ry="50" fill="#d6d6d6"/>
</g>
<g filter="url(#pb)">
<!-- ===== chair back (top) ===== -->
<g transform="scale(0.24254)">
<path d="M1130 520Q1250 430 1360 500Q1470 590 1470 760Q1460 900 1400 975L1300 960L1120 760Z" fill="#1b1b1b"/>
<path d="M1165 580Q1250 510 1320 580Q1375 660 1355 800Q1335 880 1295 900L1190 760Z" fill="#484848"/>
<path d="M1395 560Q1440 640 1435 780Q1425 880 1395 930" fill="none" stroke="#5a5a5a" stroke-width="14"/>
</g>
<!-- ===== coat upper ===== -->
<g transform="scale(0.24254)">
<path d="M770 480L700 535L480 572L400 612L300 700L200 870L100 1010L28 1090L1516 1090L1492 1062L1400 1000L1175 800L1050 890L1030 850L1000 760L930 720L800 660Z" fill="#1a1a1a"/>
<path d="M480 585Q380 640 310 740Q260 840 230 930L330 900Q380 760 520 640Z" fill="#2c2c2c"/>
<path d="M640 560L760 500L800 660L820 800L700 900Q640 760 640 560Z" fill="#141414"/>
<!-- shirt -->
<path d="M798 668L832 722L985 792L962 1000L905 1062L846 1042L822 800L792 752Z" fill="#e4e4e4"/>
<path d="M880 800L890 1040" stroke="#b8b8b8" stroke-width="8"/>
<!-- bow tie -->
<path d="M785 735Q830 715 880 745Q920 730 955 770Q930 800 880 790Q830 810 790 780Z" fill="#5a5a5a"/>
<ellipse cx="880" cy="760" rx="22" ry="26" fill="#2a2a2a"/>
<!-- beard/neck -->
<path d="M822 395Q800 440 800 500Q800 620 850 680Q930 730 1010 722Q1085 660 1120 545L1030 610L950 590L900 500L850 400Z" fill="#262626"/>
<!-- face -->
<path d="M870 300Q960 250 1160 235Q1165 330 1150 405Q1135 480 1110 525L1030 612L950 592Q905 540 895 500Q860 430 850 400Q850 340 870 300Z" fill="#d6d6d6"/>
<path d="M1105 300Q1160 300 1158 400Q1140 480 1112 525Q1100 420 1105 300Z" fill="#bcbcbc"/>
<path d="M860 400Q880 470 905 520Q925 480 900 420Z" fill="#8a8a8a"/>
<!-- brows & eyes -->
<path d="M895 335Q950 318 1005 345L1000 356Q950 338 898 348Z" fill="#2a2a2a"/>
<path d="M1060 350Q1100 345 1140 366L1136 376Q1100 360 1062 362Z" fill="#2a2a2a"/>
<ellipse cx="940" cy="360" rx="28" ry="9" fill="#1e1e1e"/>
<ellipse cx="1092" cy="380" rx="24" ry="8" fill="#1e1e1e"/>
<path d="M1020 380Q1010 440 975 470Q1000 490 1045 480" fill="none" stroke="#9a9a9a" stroke-width="9"/>
<path d="M985 478Q1010 492 1045 482" fill="none" stroke="#6a6a6a" stroke-width="7"/>
<path d="M950 540Q1000 528 1060 548L1050 560Q1000 545 955 552Z" fill="#4a4a4a"/>
<!-- hair -->
<path d="M735 340Q745 250 790 185Q850 100 960 82Q1060 75 1130 130Q1170 175 1180 215Q1225 300 1240 400Q1245 450 1195 480Q1175 440 1165 380L1160 240L1010 195Q930 270 850 330Q830 390 800 440Q790 390 790 380Z" fill="#222"/>
<path d="M830 180Q900 110 1000 105Q1070 108 1110 140Q1020 130 960 170Q890 210 850 270Z" fill="#444"/>
<path d="M1010 195Q1090 190 1160 240" fill="none" stroke="#111" stroke-width="8"/>
<!-- hand at chin -->
<path d="M1000 745L1030 692L1090 642L1120 562L1150 520L1162 600L1150 700L1122 762L1062 812L1040 832Z" fill="#d2d2d2"/>
<path d="M1030 852L1160 765L1176 800L1050 892Z" fill="#ededed"/>
</g>
<!-- ===== lower half ===== -->
<g transform="translate(0 262) scale(0.24254)">
<!-- coat / legs big dark mass -->
<path d="M30 -8L25 0Q10 70 22 130Q50 215 130 262L280 310L330 335L290 380Q230 520 215 640Q230 760 300 850L120 840L110 1010L1480 1085L1440 960L1380 800L1290 600L1290 470L1345 300L1360 200L1460 180L1500 150L1512 0L1516 -8Z" fill="#1a1a1a"/>
<path d="M300 350Q600 330 900 410Q1100 450 1230 560Q1000 480 700 470Q450 470 300 560Z" fill="#262626"/>
<path d="M230 600Q400 560 520 610Q430 700 420 820L300 850Q230 760 230 600Z" fill="#2a2a2a"/>
<!-- chair left arm highlight -->
<path d="M125 262Q200 320 240 440Q235 520 200 570Q155 650 140 760Q160 820 210 835L135 850Q110 760 130 650Q150 560 185 480Q200 380 120 300Z" fill="#cbcbcb"/>
<path d="M150 290Q215 360 222 450" fill="none" stroke="#333" stroke-width="14"/>
<path d="M285 315L330 336L290 372Z" fill="#dcdcdc"/>
<!-- cuff & hand -->
<path d="M528 302L580 188L692 232L602 332Z" fill="#e9e9e9"/>
<path d="M600 232L692 232L800 282L860 342L882 402L780 372L600 336Z" fill="#cfcfcf"/>
<path d="M315 60L345 35L335 95Z" fill="#d8d8d8"/>
<!-- seat stripes -->
<path d="M120 838Q400 800 760 880L760 1010L110 1010Z" fill="#2b2b2b"/>
<path d="M130 800L260 790L300 850L135 905Z" fill="#9a9a9a"/>
<path d="M150 815L280 870M180 800L300 850" stroke="#3a3a3a" stroke-width="10"/>
<path d="M370 870Q450 810 560 830Q640 850 700 890Q560 870 470 880Q400 890 370 870Z" fill="#b0b0b0"/>
<path d="M160 925Q400 880 740 935" fill="none" stroke="#8a8a8a" stroke-width="16"/>
<path d="M150 975Q400 940 700 990" fill="none" stroke="#5a5a5a" stroke-width="12"/>
<path d="M120 900Q130 980 170 1040" fill="none" stroke="#8a8a8a" stroke-width="14"/>
<!-- right chair arm -->
<path d="M1345 255Q1360 190 1440 180Q1500 190 1500 240Q1480 290 1420 300Q1380 290 1345 255Z" fill="#5a5a5a"/>
<path d="M1360 250Q1400 200 1450 215" fill="none" stroke="#d8d8d8" stroke-width="12"/>
<path d="M1350 300Q1300 400 1300 520Q1310 640 1370 740Q1420 790 1430 860L1390 880Q1380 800 1330 740Q1270 640 1270 500Q1280 380 1330 300Z" fill="#262626"/>
<path d="M1345 330Q1305 430 1312 540Q1325 640 1375 720" fill="none" stroke="#c2c2c2" stroke-width="20"/>
<path d="M1385 590Q1440 640 1435 760Q1430 830 1400 870" fill="none" stroke="#1c1c1c" stroke-width="26"/>
<path d="M1380 640Q1410 690 1400 770" fill="none" stroke="#bdbdbd" stroke-width="18"/>
<!-- floor -->
<path d="M0 1012L1542 1012L1542 1085L0 1085Z" fill="#1c1c1c"/>
<path d="M1440 960L1542 960L1542 1012L1440 1012Z" fill="#222"/>
</g>
</g>
<rect width="374" height="524" filter="url(#grain)" opacity=".75"/>
<rect width="374" height="524" filter="url(#grainL)" opacity=".14"/>
</svg></div>
<div style="left:1379px;top:265px;font:400 19.3px/21px 'Liberation Sans',sans-serif;color:#1d1d1b;letter-spacing:-0.189px;white-space:pre;-webkit-text-stroke:0.2px #1d1d1b;">«…неужели все то, что выразилось</div>
<div style="left:1402px;top:291px;font:400 19.3px/21px 'Liberation Sans',sans-serif;color:#1d1d1b;letter-spacing:-0.036px;white-space:pre;-webkit-text-stroke:0.2px #1d1d1b;">в языке народа, скрывается в</div>
<div style="left:1424.9px;top:316px;font:400 19.3px/21px 'Liberation Sans',sans-serif;color:#1d1d1b;letter-spacing:-0.257px;white-space:pre;-webkit-text-stroke:0.2px #1d1d1b;">народе?… Но, в ответ на</div>
<div style="left:1381.6px;top:342px;font:400 19.3px/21px 'Liberation Sans',sans-serif;color:#1d1d1b;letter-spacing:0.079px;white-space:pre;-webkit-text-stroke:0.2px #1d1d1b;">рождающееся в нас сомнение, из</div>
<div style="left:1430px;top:367px;font:400 19.3px/21px 'Liberation Sans',sans-serif;color:#1d1d1b;letter-spacing:0.039px;white-space:pre;-webkit-text-stroke:0.2px #1d1d1b;">этой же самой – серой,</div>
<div style="left:1392px;top:393px;font:400 19.3px/21px 'Liberation Sans',sans-serif;color:#1d1d1b;letter-spacing:0.145px;white-space:pre;-webkit-text-stroke:0.2px #1d1d1b;">невежественной, грубой массы</div>
<div style="left:1381.6px;top:418px;font:400 19.3px/21px 'Liberation Sans',sans-serif;color:#1d1d1b;letter-spacing:0.080px;white-space:pre;-webkit-text-stroke:0.2px #1d1d1b;">льется чудная народная песнь, из</div>
<div style="left:1423px;top:444px;font:400 19.3px/21px 'Liberation Sans',sans-serif;color:#1d1d1b;letter-spacing:0.213px;white-space:pre;-webkit-text-stroke:0.2px #1d1d1b;">которой почерпают свое</div>
<div style="left:1376.3px;top:469px;font:400 19.3px/21px 'Liberation Sans',sans-serif;color:#1d1d1b;letter-spacing:0.323px;white-space:pre;-webkit-text-stroke:0.2px #1d1d1b;">вдохновение и поэт, и художник,</div>
<div style="left:1402px;top:495px;font:400 19.3px/21px 'Liberation Sans',sans-serif;color:#1d1d1b;letter-spacing:0.064px;white-space:pre;-webkit-text-stroke:0.2px #1d1d1b;">музыкант; слышится меткое ,</div>
<div style="left:1405.5px;top:520px;font:400 19.3px/21px 'Liberation Sans',sans-serif;color:#1d1d1b;letter-spacing:0.068px;white-space:pre;-webkit-text-stroke:0.2px #1d1d1b;">глубокое слово, в которое, с</div>
<div style="left:1375.6px;top:546px;font:400 19.3px/21px 'Liberation Sans',sans-serif;color:#1d1d1b;letter-spacing:0.165px;white-space:pre;-webkit-text-stroke:0.2px #1d1d1b;">помощью науки и сильно развитой</div>
<div style="left:1392px;top:572px;font:400 19.3px/21px 'Liberation Sans',sans-serif;color:#1d1d1b;letter-spacing:-0.008px;white-space:pre;-webkit-text-stroke:0.2px #1d1d1b;">мысли, вдумывается филолог и</div>
<div style="left:1381.6px;top:597px;font:400 19.3px/21px 'Liberation Sans',sans-serif;color:#1d1d1b;letter-spacing:0.001px;white-space:pre;-webkit-text-stroke:0.2px #1d1d1b;">философ и приходят в изумление</div>
<div style="left:1384.4px;top:623px;font:400 19.3px/21px 'Liberation Sans',sans-serif;color:#1d1d1b;letter-spacing:-0.018px;white-space:pre;-webkit-text-stroke:0.2px #1d1d1b;">от глубины и истины этого слова,</div>
<div style="left:1379.8px;top:649px;font:400 19.3px/21px 'Liberation Sans',sans-serif;color:#1d1d1b;letter-spacing:-0.008px;white-space:pre;-webkit-text-stroke:0.2px #1d1d1b;">несущегося из самых отдаленных,</div>
<div style="left:1395.7px;top:674px;font:400 19.3px/21px 'Liberation Sans',sans-serif;color:#1d1d1b;letter-spacing:0.146px;white-space:pre;-webkit-text-stroke:0.2px #1d1d1b;">самых диких, невежественных</div>
<div style="left:1686px;top:213px;width:31px;height:24px;background:#e9eef0;"></div>
<svg style="left:1692.5px;top:220px;" width="11" height="10" viewBox="0 0 11 10"><path d="M1 3.500L3.500 3.500L3.500 1M10 3.500L7.500 3.500L7.500 1M1 6.500L3.500 6.500L3.500 9M10 6.500L7.500 6.500L7.500 9" fill="none" stroke="#555f66" stroke-width="1"/></svg>
<div style="left:1681.6px;top:411.7px;width:42.2px;height:209.5px;background:#fff;border-radius:5px;box-shadow:0 0 4px rgba(0,0,0,.25);"></div>
<div style="left:1681.6px;top:453.59999999999997px;width:42.2px;height:1px;background:#dfe3e6;"></div>
<div style="left:1681.6px;top:495.5px;width:42.2px;height:1px;background:#dfe3e6;"></div>
<div style="left:1681.6px;top:537.4px;width:42.2px;height:1px;background:#dfe3e6;"></div>
<div style="left:1681.6px;top:579.3px;width:42.2px;height:1px;background:#dfe3e6;"></div>
<svg style="left:1691px;top:417px;" width="24" height="26" viewBox="0 0 24 26"><path d="M6.500 14V6.500a1.500 1.500 0 0 1 3 0V12M9.500 12V3.500a1.500 1.500 0 0 1 3 0V12M12.500 12V4.500a1.500 1.500 0 0 1 3 0V12.500M15.500 12.500V7.500a1.500 1.500 0 0 1 3 0V17c0 4.500-2.500 7-6.500 7c-3 0-4.500-1-6-3.500L2.600 15.500c-.6-1.200 1-2.300 2-1.200L6.500 16.500" fill="none" stroke="#45525c" stroke-width="1.300" stroke-linejoin="round"/></svg>
<svg style="left:1683px;top:442px;" width="8.5" height="8.5" viewBox="0 0 8.5 8.5"><path d="M0 0V8.500H8.500Z" fill="#45525c"/></svg>
<svg style="left:1690px;top:462px;" width="24" height="24" viewBox="0 0 24 24"><path d="M3.500 8.500H14a6.500 6.500 0 0 1 0 13H10" fill="none" stroke="#45525c" stroke-width="1.400"/><path d="M8.500 3L3 8.500L8.500 14" fill="none" stroke="#45525c" stroke-width="1.400"/></svg>
<svg style="left:1692px;top:503px;" width="22" height="26" viewBox="0 0 22 26"><path d="M1 6H21M7.500 6V2.500H14.500V6M2.800 6L4.500 24H17.500L19.200 6" fill="none" stroke="#45525c" stroke-width="1.500"/><path d="M7.500 9.500V20.500M11 9.500V20.500M14.500 9.500V20.500" stroke="#45525c" stroke-width="1.400"/></svg>
<svg style="left:1690px;top:545px;" width="26" height="26" viewBox="0 0 26 26"><path d="M9 4.500c3-3 6 1 9-1.500s5-1.500 7-1" fill="none" stroke="#45525c" stroke-width="1.200"/><path d="M8.500 16V9a1.400 1.400 0 0 1 2.800 0v5.500M11.300 14.500v-1a1.300 1.300 0 0 1 2.600 0v1.500M13.900 15v-.5a1.300 1.300 0 0 1 2.600 0V16M16.500 16a1.200 1.200 0 0 1 2.400 0v3c0 3.500-2 5.500-5.500 5.500c-2.500 0-4-1-5-3L5.800 17.500c-.5-1 .8-2 1.700-1L8.500 18" fill="none" stroke="#45525c" stroke-width="1.200" stroke-linejoin="round"/></svg>
<svg style="left:1690px;top:590px;" width="27" height="21" viewBox="0 0 27 21"><rect x=".8" y=".8" width="25.400" height="19.400" rx="2" fill="none" stroke="#45525c" stroke-width="1.500"/><path d="M4 13.500c3-1 4.500-5 7.500-4.500s3.500 1 5.500-.5s3-3 5.500-3" fill="none" stroke="#45525c" stroke-width="1.400"/></svg>
<svg style="left:1335px;top:591px;" width="18" height="20" viewBox="0 0 18 20"><path d="M5 11V5a1.200 1.200 0 0 1 2.400 0V9.500M7.400 9.500V3.200a1.200 1.200 0 0 1 2.400 0V9.500M9.800 9.500V4a1.200 1.200 0 0 1 2.400 0V10M12.200 10V6a1.200 1.200 0 0 1 2.400 0V13.500c0 3.500-2 5.500-5 5.500c-2.500 0-3.600-.8-4.800-2.800L2 12.500c-.5-1 .8-1.800 1.600-1L5 13" fill="#fff" stroke="#333" stroke-width="1" stroke-linejoin="round"/></svg>
<svg style="left:758.9px;top:832.7px;" width="41" height="41" viewBox="0 0 41 41"><circle cx="20.500" cy="20.500" r="20.500" fill="#1a7ce4"/><path d="M20.500 11.500V29.500M11.500 20.500H29.500" stroke="#fff" stroke-width="1.800"/></svg>
<svg style="left:1089px;top:831.2px;" width="44" height="44" viewBox="0 0 44 44"><circle cx="22" cy="22" r="21.500" fill="#dfe6ee"/><circle cx="22" cy="22" r="19.800" fill="#1a7ce4"/><rect x="18.600" y="11.500" width="6.800" height="13" rx="3.400" fill="none" stroke="#fff" stroke-width="1.500"/><path d="M15 21.500a7 7 0 0 0 14 0M22 28.500V32M18 32.300H26" fill="none" stroke="#fff" stroke-width="1.500"/></svg>
<svg style="left:1152.8px;top:832.7px;" width="41" height="41" viewBox="0 0 41 41"><circle cx="20.500" cy="20.500" r="20.500" fill="#1a7ce4"/><path d="M11.500 17.500H15.500L20.500 13V28L15.500 23.500H11.500Z" fill="none" stroke="#fff" stroke-width="1.500" stroke-linejoin="round"/><path d="M23.500 17.500a4 4 0 0 1 0 6M26 15a7.500 7.500 0 0 1 0 11" fill="none" stroke="#fff" stroke-width="1.400"/></svg>
<svg style="left:1215.5px;top:832.7px;" width="41" height="41" viewBox="0 0 41 41"><circle cx="20.500" cy="20.500" r="20.500" fill="#1a7ce4"/><rect x="10.500" y="14.500" width="14" height="12" rx="2" fill="none" stroke="#fff" stroke-width="1.800"/><path d="M24.500 19l6-3.500v10L24.500 22z" fill="#fff"/></svg>
<svg style="left:1181.5px;top:859.5px;" width="17" height="17" viewBox="0 0 17 17"><circle cx="8.500" cy="8.500" r="8.500" fill="#081e33"/><circle cx="8.500" cy="8.500" r="7" fill="#e9eef2"/><path d="M5.300 7.200L8.500 10.300L11.700 7.200" fill="none" stroke="#3a4146" stroke-width="1.300"/></svg>
<svg style="left:1243.5px;top:859.5px;" width="17" height="17" viewBox="0 0 17 17"><circle cx="8.500" cy="8.500" r="8.500" fill="#081e33"/><circle cx="8.500" cy="8.500" r="7" fill="#e9eef2"/><path d="M5.300 7.200L8.500 10.300L11.700 7.200" fill="none" stroke="#3a4146" stroke-width="1.300"/></svg>
<svg style="left:1277.5px;top:832.7px;" width="42" height="42" viewBox="0 0 42 42"><circle cx="21" cy="21" r="19.800" fill="none" stroke="#fff" stroke-width="2"/><rect x="12.500" y="14" width="17" height="12" rx="1.500" fill="none" stroke="#fff" stroke-width="1.500"/><path d="M17 29H25M11.500 30.500L30.500 12" stroke="#fff" stroke-width="1.500" fill="none"/></svg>
<div style="left:185px;top:885.5px;width:1550px;height:40.5px;background:linear-gradient(90deg,#1c303b 0%,#1e3340 55%,#2a4259 100%);"></div>
<div style="left:484px;top:885.5px;width:48.5px;height:40.5px;background:#47585f;"></div>
<div style="left:484px;top:923.8px;width:48.5px;height:2.2px;background:#76b9ed;"></div>
<div style="left:537.5px;top:923.8px;width:41.5px;height:2.2px;background:#76b9ed;"></div>
<div style="left:1730.5px;top:886px;width:1px;height:40px;background:#5a6b78;"></div>
<svg style="left:200.8px;top:897.0px;" width="17" height="17" viewBox="0 0 10 10"><path d="M0 1.450L4.100.88V4.800H0ZM4.600.8L10 0V4.800H4.600ZM0 5.300H4.100V9.200L0 8.600ZM4.600 5.300H10V10L4.600 9.250Z" fill="#fff"/></svg>
<svg style="left:249.0px;top:897.0px;" width="17" height="17" viewBox="0 0 10 10"><circle cx="6.200" cy="3.800" r="3.200" fill="none" stroke="#cfd6da" stroke-width="0.8"/><path d="M4 6.200L.5 9.700" stroke="#cfd6da" stroke-width="0.8"/></svg>
<svg style="left:297.3px;top:897.0px;" width="17" height="17" viewBox="0 0 10 10"><rect x="1.500" y="2.800" width="5.200" height="4.400" fill="none" stroke="#fff" stroke-width="0.9"/><path d="M1 .9H7.200M1 9.100H7.200M9 .8V3M9 4.200V6.600M9 7.800V9.200" stroke="#fff" stroke-width="0.9" fill="none"/></svg>
<svg style="left:345.5px;top:893.5px;" width="24" height="24" viewBox="0 0 10 10"><path d="M.5 1.600H4L4.800 2.600H9.500V8.600H.5Z" fill="#e8a72c"/><path d="M.5 3.200H9.500V8.800H.5Z" fill="#fcd45f"/><path d="M2.600 6H7.400V8.800H2.600Z" fill="#3e8fdc"/><path d="M3.600 7.300H6.400V8.800H3.600Z" fill="#fcd45f"/></svg>
<svg style="left:395.0px;top:892.5px;" width="25" height="25" viewBox="0 0 10 10"><defs><radialGradient id="ff407" cx=".5" cy=".4" r=".6"><stop offset="0" stop-color="#ffde3d"/><stop offset=".5" stop-color="#ff9a1f"/><stop offset="1" stop-color="#e6332a"/></radialGradient></defs><circle cx="5" cy="5.400" r="4.500" fill="url(#ff407)"/><path d="M6.200.3C7 1.200 7.200 2 7 2.800C8.500 3.500 9.200 5 8.800 6.500L7 4.500L5.500 3.500Z" fill="#ffb52e"/><circle cx="4.700" cy="5.300" r="2.300" fill="#7a3fc4"/><path d="M2.400 5c.5-1.200 1.800-1.600 2.800-1.200c-.8.200-1.200.8-1.200 1.400c.8-.3 1.800.2 1.800 1c-.8.800-2.800.6-3.400-1.200z" fill="#ff8a1a"/></svg>
<svg style="left:446.0px;top:894.0px;" width="23" height="23" viewBox="0 0 10 10"><rect x=".3" y="1.800" width="9.400" height="6.400" fill="#36a3e8"/><rect x=".9" y="2.400" width="8.200" height="5.200" fill="#bfe3fb"/><circle cx="3.200" cy="4.600" r="1.500" fill="#f4a938"/><path d="M3.200 4.600V3.100A1.500 1.500 0 0 1 4.700 4.600Z" fill="#3a7bd0"/><path d="M5.500 3.600H8.400M5.500 4.800H8.400M5.500 6H8.400M1.500 6.800H4.800" stroke="#2f7fd0" stroke-width=".55"/></svg>
<svg style="left:495.0px;top:893.0px;" width="25" height="25" viewBox="0 0 10 10"><circle cx="5" cy="5" r="4.800" fill="#fff"/><path d="M5 5L.850 2.600A4.800 4.800 0 0 1 9.150 2.600Z" fill="#e33b2e"/><path d="M5 5L9.150 2.600A4.800 4.800 0 0 1 5 9.800Z" fill="#fcc934"/><path d="M5 5L5 9.800A4.800 4.800 0 0 1 .850 2.600Z" fill="#2da94f"/><path d="M.850 2.600A4.800 4.800 0 0 1 9.150 2.600L5 2.800Z" fill="#e33b2e"/><circle cx="5" cy="5" r="2.250" fill="#fff"/><circle cx="5" cy="5" r="1.800" fill="#4285f4"/></svg>
<svg style="left:545.5px;top:896px;" width="25" height="19" viewBox="0 0 25 19"><rect x="1" y="1" width="23" height="17" rx="4" fill="#fff" stroke="#2f6fe0" stroke-width="1.800"/><rect x="3.800" y="3.800" width="17.400" height="11.400" rx="2.500" fill="#dbe6fb" stroke="#2f6fe0" stroke-width="1"/><circle cx="12.500" cy="9.500" r="3" fill="#2a3fb0"/></svg>
<div style="left:1618.9px;top:910px;font:400 11.19px/12px 'Liberation Sans',sans-serif;color:#fff;letter-spacing:-0.001px;white-space:pre;">03.03.2023</div>
<svg style="left:1692px;top:902px;" width="19" height="14" viewBox="0 0 19 14"><path d="M1 0H18V9.500H12L9.500 12L7 9.500H1Z" fill="#fff"/></svg>
<div style="left:1351.800px;top:702.200px;width:363.300px;height:203.400px;background:#293362;box-shadow:0 2px 7px rgba(0,0,0,.55);overflow:hidden;">
<svg style="left:0;top:0" width="363.300" height="203.400" viewBox="0 0 363.300 203.400">
<defs><linearGradient id="og" x1="0" y1="0" x2="1" y2="0"><stop offset="0" stop-color="#2a3767"/><stop offset="1" stop-color="#27305a"/></linearGradient>
<radialGradient id="obsg" cx=".5" cy=".45" r=".6"><stop offset="0" stop-color="#4a484a"/><stop offset=".7" stop-color="#2a282a"/><stop offset="1" stop-color="#1e1c1e"/></radialGradient></defs>
<rect width="364" height="204" fill="url(#og)"/>
<path d="M0 116.700L363.300 21.100V167.400Z" fill="#2c3c80"/>
<path d="M0 116.700L363.300 167.400V204H0Z" fill="#282a46"/>
<circle cx="181.500" cy="70.700" r="46" fill="#fff"/><circle cx="181.500" cy="70.700" r="41.500" fill="url(#obsg)"/>
<g transform="translate(181.500 70.700)"><clipPath id="obc"><circle r="41"/></clipPath><g clip-path="url(#obc)"><g fill="#d4d4d4"><circle cx="1.5" cy="-20" r="20.8" transform="rotate(0)"/><circle cx="1.5" cy="-20" r="20.8" transform="rotate(120)"/><circle cx="1.5" cy="-20" r="20.8" transform="rotate(240)"/></g><g fill="#2b292b"><circle cx="-0.5" cy="-23.4" r="19.2" transform="rotate(0)"/><circle cx="-0.5" cy="-23.4" r="18.9" transform="rotate(120)"/><circle cx="-0.5" cy="-23.4" r="18.9" transform="rotate(240)"/></g></g></g>
<g transform="translate(165 149)"><path d="M0 7L8 12V5H32V28H0Z" fill="#a9a9a9"/><path d="M1 33L33 -1" stroke="#282a46" stroke-width="5"/><path d="M2 34L34 0" stroke="#a9a9a9" stroke-width="2.600"/></g>
</svg></div>
<svg style="left:11px;top:960px;" width="21" height="20" viewBox="0 0 21 20"><path d="M.5 0L20.500 10L.5 20Z" fill="#000"/></svg>
<div style="left:49.2px;top:961.8px;width:5.7px;height:16.4px;background:#000;"></div>
<div style="left:59.3px;top:961.8px;width:5.4px;height:16.4px;background:#000;"></div>
<div style="left:86.4px;top:961.8px;width:15.4px;height:16.4px;background:#000;"></div>
<div style="left:115.2px;top:955.5px;width:1px;height:31px;background:#8a8a8a;"></div>
<div style="left:271.2px;top:955.5px;width:1px;height:31px;background:#8a8a8a;"></div>
<div style="left:316.1px;top:955.5px;width:1px;height:31px;background:#8a8a8a;"></div>
<svg style="left:127.9px;top:963px;" width="21" height="14" viewBox="0 0 21 14"><rect x="0" y="0" width="2" height="14"/><path d="M3.500 7L12 0V14Z"/><path d="M12 7L20.500 0V14Z"/></svg>
<svg style="left:166.5px;top:963px;" width="18" height="14" viewBox="0 0 18 14"><path d="M0 7L9 0V14Z"/><path d="M9 7L18 0V14Z"/></svg>
<svg style="left:205px;top:963px;" width="18" height="14" viewBox="0 0 18 14"><path d="M9 7L0 0V14Z"/><path d="M18 7L9 0V14Z"/></svg>
<svg style="left:238.2px;top:963px;" width="21" height="14" viewBox="0 0 21 14"><path d="M8.500 7L0 0V14Z"/><path d="M17 7L8.500 0V14Z"/><rect x="19" y="0" width="2" height="14"/></svg>
<svg style="left:287.2px;top:963px;" width="17" height="14" viewBox="0 0 17 14"><rect x="0" y="0" width="4" height="14"/><path d="M17 7L6.800 0V14Z"/></svg>
<svg style="left:1812px;top:958px;" width="31" height="26" viewBox="0 0 31 26"><path d="M1 8.500H7L15.500 1V25L7 17.500H1Z" fill="#000"/><path d="M18.500 9.500a4.500 4.500 0 0 1 0 7M21.500 6.500a8.500 8.500 0 0 1 0 13" fill="none" stroke="#000" stroke-width="1.500"/><circle cx="18.300" cy="13" r="1.200" fill="#000"/></svg>
<svg style="left:1857px;top:956px;" width="58" height="25" viewBox="0 0 58 25"><path d="M13 23L56 2V23Z" fill="#f6f6f6" stroke="#9a9a9a" stroke-width=".7"/><path d="M.5 1.500V22.500H13V1.500" fill="#f0f0f0"/><path d="M.5 1.500V22.500" stroke="#fff" stroke-width="1"/><path d="M.5 22.500H13V1" fill="none" stroke="#333" stroke-width="1.200"/></svg>
<div style="left:1128px;top:936px;width:1px;height:1px;background:#000;"></div>
<div style="left:1131px;top:942px;width:1px;height:1px;background:#000;"></div>
<svg style="left:1890px;top:1005px;" width="23" height="14" viewBox="0 0 23 14"><path d="M8 2V12L12 7ZM16 2V12L12 7Z" fill="#d8d8d8"/><path d="M9 1V13M15 1V13" stroke="#fff" stroke-width="1"/><path d="M1 2H3M1 5H3M1 8H3M1 11H3M20 2H22M20 5H22M20 8H22M20 11H22M5 3H6M5 10H6M18 3H19M18 10H19" stroke="#d8d020" stroke-width="1.200"/></svg>
<svg style="left:19.85px;top:1044.95px;" width="20.5" height="20.5" viewBox="0 0 10 10"><path d="M0 1.450L4.100.88V4.800H0ZM4.600.8L10 0V4.800H4.600ZM0 5.300H4.100V9.200L0 8.600ZM4.600 5.300H10V10L4.600 9.250Z" fill="#fff"/></svg>
<svg style="left:80.05px;top:1044.75px;" width="20.5" height="20.5" viewBox="0 0 10 10"><circle cx="6.200" cy="3.800" r="3.200" fill="none" stroke="#fff" stroke-width="0.8"/><path d="M4 6.200L.5 9.700" stroke="#fff" stroke-width="0.8"/></svg>
<svg style="left:139.65px;top:1044.45px;" width="20.5" height="20.5" viewBox="0 0 10 10"><rect x="1.500" y="2.800" width="5.200" height="4.400" fill="none" stroke="#fff" stroke-width="0.8"/><path d="M1 .9H7.200M1 9.100H7.200M9 .8V3M9 4.200V6.600M9 7.800V9.200" stroke="#fff" stroke-width="0.8" fill="none"/></svg>
<svg style="left:199.2px;top:1040.0px;" width="29" height="29" viewBox="0 0 10 10"><path d="M.5 1.600H4L4.800 2.600H9.500V8.600H.5Z" fill="#e8a72c"/><path d="M.5 3.200H9.500V8.800H.5Z" fill="#fcd45f"/><path d="M2.600 6H7.400V8.800H2.600Z" fill="#3e8fdc"/><path d="M3.600 7.300H6.400V8.800H3.600Z" fill="#fcd45f"/></svg>
<svg style="left:261.0px;top:1039.0px;" width="30" height="30" viewBox="0 0 10 10"><defs><radialGradient id="ff276" cx=".5" cy=".4" r=".6"><stop offset="0" stop-color="#ffde3d"/><stop offset=".5" stop-color="#ff9a1f"/><stop offset="1" stop-color="#e6332a"/></radialGradient></defs><circle cx="5" cy="5.400" r="4.500" fill="url(#ff276)"/><path d="M6.200.3C7 1.200 7.200 2 7 2.800C8.500 3.500 9.200 5 8.800 6.500L7 4.500L5.500 3.500Z" fill="#ffb52e"/><circle cx="4.700" cy="5.300" r="2.300" fill="#7a3fc4"/><path d="M2.400 5c.5-1.200 1.800-1.600 2.800-1.200c-.8.200-1.200.8-1.200 1.400c.8-.3 1.800.2 1.800 1c-.8.800-2.800.6-3.400-1.200z" fill="#ff8a1a"/></svg>
<svg style="left:323.8px;top:1041.0px;" width="28" height="28" viewBox="0 0 10 10"><rect x=".3" y="1.800" width="9.400" height="6.400" fill="#36a3e8"/><rect x=".9" y="2.400" width="8.200" height="5.200" fill="#bfe3fb"/><circle cx="3.200" cy="4.600" r="1.500" fill="#f4a938"/><path d="M3.200 4.600V3.100A1.500 1.500 0 0 1 4.700 4.600Z" fill="#3a7bd0"/><path d="M5.500 3.600H8.400M5.500 4.800H8.400M5.500 6H8.400M1.500 6.800H4.800" stroke="#2f7fd0" stroke-width=".55"/></svg>
<svg style="left:385.0px;top:1040.0px;" width="30" height="30" viewBox="0 0 10 10"><circle cx="5" cy="5" r="4.800" fill="#fff"/><path d="M5 5L.850 2.600A4.800 4.800 0 0 1 9.150 2.600Z" fill="#e33b2e"/><path d="M5 5L9.150 2.600A4.800 4.800 0 0 1 5 9.800Z" fill="#fcc934"/><path d="M5 5L5 9.800A4.800 4.800 0 0 1 .850 2.600Z" fill="#2da94f"/><path d="M.850 2.600A4.800 4.800 0 0 1 9.150 2.600L5 2.800Z" fill="#e33b2e"/><circle cx="5" cy="5" r="2.250" fill="#fff"/><circle cx="5" cy="5" r="1.800" fill="#4285f4"/></svg>
<div style="left:189px;top:1077px;width:51px;height:3px;background:#76b9ed;"></div>
<div style="left:375.5px;top:1077px;width:50px;height:3px;background:#76b9ed;"></div>
<div style="left:432px;top:1030px;width:61px;height:50px;background:#5d7079;"></div>
<div style="left:432px;top:1030px;width:36.5px;height:47px;background:#5f9a73;"></div>
<div style="left:432px;top:1077px;width:61px;height:3px;background:#4ae83a;"></div>
<svg style="left:446px;top:1039px;" width="36" height="34" viewBox="0 0 36 34"><rect x="4" y="11" width="24" height="19" fill="#f4f4f4" stroke="#222" stroke-width="1.400"/>
<path d="M2.500 11L25.500 3L27 7L4 15Z" fill="#222"/><path d="M7 10.200l2.600-.9 1 2.800-2.600.9zM13 8.100l2.600-.9 1 2.800-2.600.9zM19 6l2.600-.9 1 2.800-2.600.9z" fill="#fff"/>
<text x="6" y="27" font-family="Liberation Sans" font-weight="700" font-size="13" fill="#c8481c">3</text><text x="13" y="27" font-family="Liberation Sans" font-weight="700" font-size="13" fill="#2f6fd0">2</text><text x="20" y="27" font-family="Liberation Sans" font-weight="700" font-size="13" fill="#3a9a3a">1</text>
<path d="M17 14L35 24L17 34Z" fill="#cfdcff" stroke="#8fa4e8" stroke-width="1"/></svg>
<svg style="left:1579px;top:1049px;" width="18" height="11" viewBox="0 0 18 11"><path d="M1 10L9 1.500L17 10" fill="none" stroke="#fff" stroke-width="1.600"/></svg>
<svg style="left:1609px;top:1044px;" width="19" height="23" viewBox="0 0 19 23"><path d="M2 0H6.500V22H2ZM6.500 12L13 6H18.500L10.500 13.500L18.500 22H13Z" fill="#2fd3a7"/></svg>
<svg style="left:1636px;top:1047px;" width="24" height="16" viewBox="0 0 24 16"><rect x="4" y="4" width="18" height="10" fill="none" stroke="#fff" stroke-width="1.300"/><rect x="6" y="6" width="14" height="6" fill="#fff"/><path d="M22.500 7V11" stroke="#fff" stroke-width="1.500"/><path d="M3 1V7M1 3H5" stroke="#fff" stroke-width="1.300"/></svg>
<svg style="left:1666px;top:1045px;" width="24" height="21" viewBox="0 0 24 21"><rect x="5" y="3" width="17" height="12" fill="none" stroke="#fff" stroke-width="1.300"/><path d="M13.500 15V19M9 19.500H18" stroke="#fff" stroke-width="1.300"/><rect x="1" y="1" width="5" height="8" fill="#223a43" stroke="#fff" stroke-width="1.200"/></svg>
<svg style="left:1696px;top:1045px;" width="24" height="20" viewBox="0 0 24 20"><path d="M1 7H5L10.500 2V18L5 13H1Z" fill="none" stroke="#fff" stroke-width="1.300" stroke-linejoin="round"/><path d="M13.500 7a4 4 0 0 1 0 6M16.500 4.500a8 8 0 0 1 0 11M19.500 2a12 12 0 0 1 0 16" fill="none" stroke="#fff" stroke-width="1.200"/></svg>
<div style="left:1732.5px;top:1049px;font:400 12.98px/15px 'Liberation Sans',sans-serif;color:#fff;letter-spacing:0.003px;white-space:pre;">РУС</div>
<div style="left:1793.5px;top:1036px;font:400 13.99px/16px 'Liberation Sans',sans-serif;color:#fff;letter-spacing:-0.002px;white-space:pre;">12:56</div>
<div style="left:1776.5px;top:1060px;font:400 13.79px/15px 'Liberation Sans',sans-serif;color:#fff;letter-spacing:-0.002px;white-space:pre;">03.03.2023</div>
<svg style="left:1869px;top:1046px;" width="21" height="20" viewBox="0 0 21 20"><path d="M.8.800H20.200V14.500H13.500L10.500 18L7.500 14.500H.8Z" fill="#fff"/><path d="M4 4.500H17M4 7.500H17M4 10.500H13" stroke="#223a43" stroke-width="1.200"/></svg>
<div style="left:727px;top:58px;font:400 43.5px/48px 'Liberation Sans',sans-serif;color:#fff;letter-spacing:-0.001px;white-space:pre;text-shadow:2px 2px 3px rgba(0,0,0,.5),0 0 2px rgba(0,0,0,.35);">Recorded with SCRE.IO</div>
<svg style="left:1439.5px;top:101.5px;" width="14" height="11" viewBox="0 0 14 11"><rect x=".5" y="1" width="9.500" height="9" rx="1.500" fill="#5f6368"/><path d="M10 4.200L13.500 1.800V9.200L10 6.800Z" fill="#5f6368"/></svg>
<svg style="left:1471px;top:99px;" width="17" height="15" viewBox="0 0 17 15"><path d="M1 5.500V13.500H11.500V10" fill="none" stroke="#7a7e83" stroke-width="1.300"/><path d="M4.500 10.500C5 7 7.500 5 11 5V2L15.500 6.200L11 10.400V7.500C8.500 7.500 6.500 8.300 4.500 10.500Z" fill="none" stroke="#7a7e83" stroke-width="1.200" stroke-linejoin="round"/></svg>
<svg style="left:1503.5px;top:99.5px;" width="15" height="14" viewBox="0 0 15 14"><path d="M7.500 1.200L9.400 5.300L13.800 5.800L10.500 8.800L11.400 13.200L7.500 11L3.600 13.200L4.500 8.800L1.200 5.800L5.600 5.300Z" fill="none" stroke="#4a4e52" stroke-width="1.300" stroke-linejoin="round"/></svg>
<svg style="left:1543.5px;top:101px;" width="16" height="12" viewBox="0 0 16 12"><rect x=".8" y=".8" width="14.400" height="10.400" rx="2.500" fill="#e4ecfc" stroke="#3a72e0" stroke-width="1.500"/><circle cx="8" cy="6" r="2.300" fill="#2c3fb8"/></svg>
<svg style="left:1575.5px;top:99px;" width="16" height="16" viewBox="0 0 16 16"><path d="M6.200 2.500a1.800 1.800 0 0 1 3.600 0V3.800H12.800V7h1a1.800 1.800 0 0 1 0 3.600h-1V14H9.200V12.800a1.700 1.700 0 0 0-3.400 0V14H2.200V10.400H3.300a1.700 1.700 0 0 0 0-3.400H2.200V3.800H6.200Z" fill="#4a4e52"/></svg>
<svg style="left:1607.5px;top:99px;" width="17" height="16" viewBox="0 0 17 16"><path d="M8.500 1V10M4.500 6.500L8.500 10.500L12.500 6.500" fill="none" stroke="#4a4e52" stroke-width="1.700"/><path d="M1.500 11V14.500H15.500V11" fill="none" stroke="#4a4e52" stroke-width="1.700"/></svg>
<svg style="left:1641px;top:100px;" width="15" height="14" viewBox="0 0 15 14"><rect x="1" y="1" width="13" height="12" fill="none" stroke="#4a4e52" stroke-width="1.800"/><rect x="8.500" y="1" width="5.500" height="12" fill="#4a4e52"/></svg>
<svg style="left:1669.5px;top:95.2px;" width="23" height="23" viewBox="0 0 23 23"><defs><clipPath id="avc"><circle cx="11.500" cy="11.500" r="11.500"/></clipPath></defs><circle cx="11.500" cy="11.500" r="11.500" fill="#5a3a2e"/><g clip-path="url(#avc)"><circle cx="11.500" cy="9.200" r="3.600" fill="#d9cfcb"/><ellipse cx="11.500" cy="21" rx="7.500" ry="6" fill="#d9cfcb"/></g></svg>
<div style="left:1711.2px;top:100.3px;width:2.6px;height:2.6px;background:#4a4e52;border-radius:50%;"></div>
<div style="left:1711.2px;top:105.5px;width:2.6px;height:2.6px;background:#4a4e52;border-radius:50%;"></div>
<div style="left:1711.2px;top:110.7px;width:2.6px;height:2.6px;background:#4a4e52;border-radius:50%;"></div>
<div style="left:1430px;top:906.300px;width:190px;height:12px;overflow:hidden;">
<svg style="left:6px;top:-7px" width="15" height="10" viewBox="0 0 15 10"><path d="M1 9L7.500 2L14 9" fill="none" stroke="#dfe6ea" stroke-width="1.300"/></svg>
<svg style="left:31px;top:-7px" width="11" height="15" viewBox="0 0 11 15"><ellipse cx="5.500" cy="5.500" rx="4.800" ry="5" fill="#e8edf0"/><path d="M5.500 10V13.500M2 14H9" stroke="#e8edf0" stroke-width="1.300"/></svg>
<svg style="left:55px;top:-11px" width="14" height="18" viewBox="0 0 19 23"><path d="M2 0H6.500V22H2ZM6.500 12L13 6H18.500L10.500 13.500L18.500 22H13Z" fill="#2fd3a7"/></svg>
<svg style="left:79px;top:-6px" width="15" height="11" viewBox="0 0 15 11"><rect x=".7" y=".7" width="13.600" height="9" fill="none" stroke="#e8edf0" stroke-width="1.200"/><rect x="2.500" y="2.500" width="10" height="5.400" fill="#e8edf0"/></svg>
<svg style="left:103px;top:-7px" width="15" height="14" viewBox="0 0 15 14"><rect x=".7" y=".7" width="13.600" height="8.500" fill="none" stroke="#e8edf0" stroke-width="1.200"/><path d="M7.500 9V12.500M4 13H11" stroke="#e8edf0" stroke-width="1.200"/></svg>
<svg style="left:126px;top:-8px" width="17" height="14" viewBox="0 0 24 20"><path d="M1 7H5L10.500 2V18L5 13H1Z" fill="none" stroke="#e8edf0" stroke-width="1.600" stroke-linejoin="round"/><path d="M13.500 7a4 4 0 0 1 0 6M16.500 4.500a8 8 0 0 1 0 11M19.500 2a12 12 0 0 1 0 16" fill="none" stroke="#e8edf0" stroke-width="1.500"/></svg>
<div style="left:153px;top:-6.500px;font:400 10.500px/12px 'Liberation Sans',sans-serif;color:#e8edf0;letter-spacing:.4px;">РУС</div>
</div>
<div style="left:185px;top:876px;width:236px;height:9.5px;background:radial-gradient(ellipse 60% 100% at 50% 100%,rgba(60,70,80,.38),rgba(60,70,80,0) 100%);"></div>
<div style="left:1715.1px;top:704px;width:2.9px;height:117.7px;background:rgba(110,110,110,.55);"></div>
</body></html>
